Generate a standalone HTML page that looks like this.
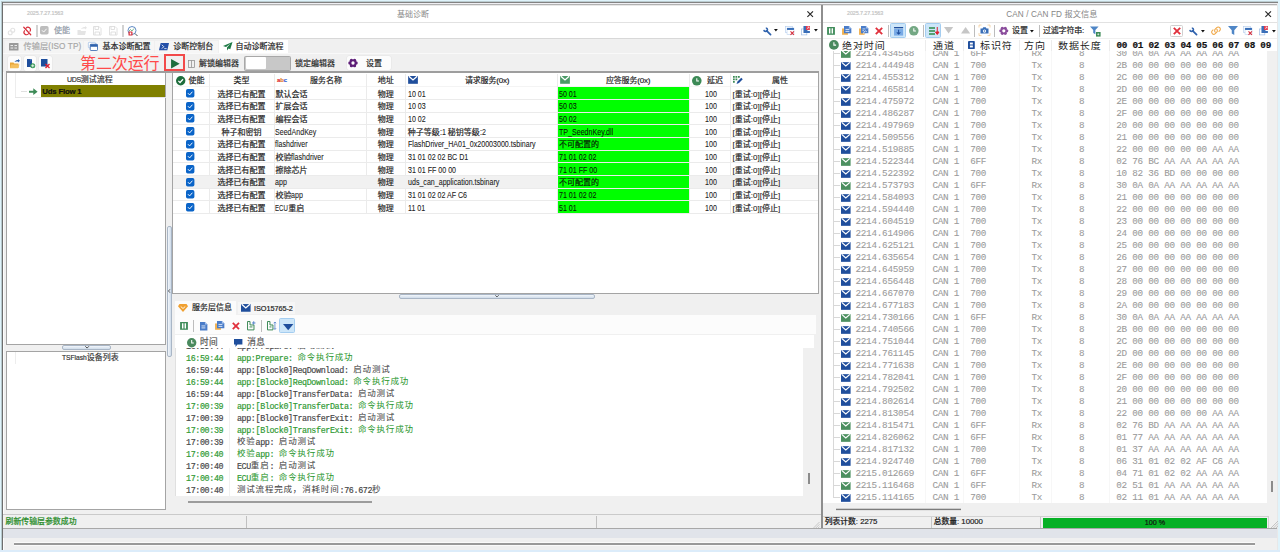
<!DOCTYPE html>
<html lang="zh"><head><meta charset="utf-8"><title>UI</title><style>
*{box-sizing:border-box;margin:0;padding:0}
html,body{width:1280px;height:552px;overflow:hidden;background:#f0f0f0}
body{position:relative;font-family:"Liberation Sans","Noto Sans CJK SC",sans-serif;font-size:8px;color:#222;line-height:1}
.a{position:absolute}
.t{position:absolute;white-space:nowrap;-webkit-text-stroke:0.18px currentColor}
.m{font-family:"Liberation Mono","Noto Sans CJK SC",monospace}
.u{-webkit-text-stroke:0.08px currentColor}
svg{position:absolute;overflow:visible}
.lc{font-size:8.5px;letter-spacing:0.83px;font-family:"Liberation Mono","Noto Sans CJK SC",monospace;position:relative;top:-1px;-webkit-text-stroke:0.05px currentColor}

</style></head><body>
<div class="a" style="left:0px;top:0px;width:1280px;height:552px;background:#dff3fb;"></div>
<div class="a" style="left:0px;top:550px;width:1280px;height:2px;background:#dcecfa;"></div>
<div class="a" style="left:1px;top:1px;width:1277px;height:549px;background:#f0f0f0;"></div>
<div class="a" style="left:1277px;top:1px;width:1px;height:549px;background:#e8e8e8;"></div>
<div class="a" style="left:1px;top:1px;width:1277px;height:1px;background:#bccdd1;"></div>
<div class="a" style="left:2px;top:2px;width:1276px;height:1px;background:#828282;"></div>
<div class="a" style="left:3px;top:3px;width:1274px;height:1px;background:#efeff3;"></div>
<div class="a" style="left:3px;top:4px;width:1274px;height:1px;background:#b2b2b2;"></div>
<div class="a" style="left:3px;top:5px;width:1274px;height:1px;background:#e8e8e8;"></div>
<div class="a" style="left:1px;top:1px;width:1px;height:549px;background:#b8cace;"></div>
<div class="a" style="left:2px;top:2px;width:1px;height:548px;background:#6e6e6e;"></div>
<div class="a" style="left:3px;top:6px;width:1px;height:544px;background:#fdfdfd;"></div>
<div class="a" style="left:3.3px;top:528.7px;width:1274px;height:9.5px;background:#e1e4ea;"></div>
<div class="a" style="left:4px;top:538.2px;width:1273px;height:11.8px;background:#f0f0f0;"></div>
<div class="a" style="left:14px;top:542px;width:1241px;height:4px;background:#fbfbfb;"></div>
<div class="a" style="left:14px;top:543px;width:1241px;height:2px;background:#9a9a9a;"></div>
<div class="a" style="left:3.3px;top:6px;width:817.7px;height:16.2px;background:#fff;"></div>
<div class="a" style="left:3.3px;top:22.2px;width:817.7px;height:16px;background:#fff;"></div>
<div class="a" style="left:3.3px;top:22px;width:817.7px;height:0.7px;background:#e2e2e2;"></div>
<div class="a" style="left:3.3px;top:38.2px;width:817.7px;height:0.7px;background:#d8d8d8;"></div>
<div class="a" style="left:821px;top:5px;width:2px;height:524px;background:#8e8e8e;"></div>
<div class="a" style="left:822.8px;top:6px;width:454.5px;height:16.2px;background:#fff;"></div>
<div class="a" style="left:822.8px;top:22.2px;width:454.5px;height:16px;background:#fff;"></div>
<div class="a" style="left:822.8px;top:22px;width:454.5px;height:0.7px;background:#e2e2e2;"></div>
<div class="t" style="left:27px;top:11px;font-size:5.4px;color:#c4c4c4;letter-spacing:-0.1px">2025.7.27.1563</div>
<div class="t" style="left:397px;top:11.2px;font-size:8px;color:#8a8a8a;-webkit-text-stroke:0">基础诊断</div>
<svg style="left:806.8px;top:10.9px;" width="6.4" height="6.2" viewBox="0 0 10 10"><path d="M0.5 0.5L9.5 9.5M9.5 0.5L0.5 9.5" stroke="#2a2a2a" stroke-width="1.9" fill="none"/></svg>
<svg style="left:7px;top:26.5px;" width="9" height="9" viewBox="0 0 18 18"><g fill="none" stroke="#e3e3e3" stroke-width="2.2"><circle cx="6.5" cy="11.5" r="4"/><circle cx="11.5" cy="6.5" r="4"/></g></svg>
<svg style="left:22px;top:26px;" width="10.5" height="10" viewBox="0 0 21 20"><g fill="none" stroke="#d8303c" stroke-width="2.4" stroke-linecap="round"><path d="M8 4.5a5 5 0 0 1 8 6"/><path d="M13 15.5a5 5 0 0 1-8-6"/><path d="M3.5 2.5L17.5 17.5"/></g></svg>
<div class="a" style="left:36px;top:24.5px;width:1.5px;height:12.8px;background:#d2d2d2;"></div>
<svg style="left:40px;top:26px;" width="8.6" height="8.6" viewBox="0 0 17 17"><rect x="0" y="0" width="17" height="17" rx="3.5" fill="#bdbdbd"/><path d="M4 8.5L7.3 12L13 5.5" stroke="#fff" stroke-width="1.8" fill="none"/></svg>
<div class="t" style="left:54px;top:27px;font-size:8px;color:#8e98a6;">使能</div>
<svg style="left:76.5px;top:26px;" width="10" height="9" viewBox="0 0 20 18"><g fill="#e4e4e4"><path d="M1 8h6l1 2h10l-2 8H1z"/><path d="M8 6c2-3 5-4 8-4V0l4 3.5L16 7V5c-3 0-5 0-8 1z"/></g></svg>
<svg style="left:93px;top:26px;" width="8.5" height="9.5" viewBox="0 0 17 19"><g fill="none" stroke="#dcdcdc" stroke-width="1.8"><path d="M1 1h11l4 4v13H1z"/><path d="M4 1v6h7V1M4 18v-6h9v6"/></g></svg>
<svg style="left:109px;top:26px;" width="8.5" height="9.5" viewBox="0 0 17 19"><g fill="none" stroke="#dcdcdc" stroke-width="1.8"><path d="M1 1h11l4 4v13H1z"/><path d="M4 1v6h7V1M4 18v-6h9v6"/></g></svg>
<div class="a" style="left:122px;top:24.5px;width:1.5px;height:12.8px;background:#d2d2d2;"></div>
<svg style="left:127px;top:25.5px;" width="11" height="11" viewBox="0 0 22 22"><circle cx="10" cy="9" r="8" fill="#fff" stroke="#3a6fb8" stroke-width="1.6"/><path d="M4 10l3-3 3 3 4-5" stroke="#4a9a5c" stroke-width="1.4" fill="none"/><path d="M16 15l5 5" stroke="#555" stroke-width="2"/><rect x="3" y="11" width="8" height="8" rx="1" fill="#d8303c"/><rect x="5.5" y="13" width="3" height="4" fill="#fff"/></svg>
<svg style="left:762.6px;top:26.6px;" width="9.2" height="8.8" viewBox="0 0 17 16"><path d="M6.500 6.500L14 14" stroke="#2f62ad" stroke-width="3.200" stroke-linecap="round" fill="none"/><path d="M5.200 1.600A3.400 3.400 0 1 1 1.600 5.200" stroke="#2f62ad" stroke-width="2.800" fill="none"/></svg>
<svg style="left:774.4px;top:29px;" width="3.8" height="2.4" viewBox="0 0 8 5"><path d="M0 0h8L4 5z" fill="#111"/></svg>
<svg style="left:785px;top:26px;" width="10" height="9.4" viewBox="0 0 20 19"><rect x="0.8" y="0.8" width="14" height="12" fill="#fff" stroke="#b9d0ee" stroke-width="1.4"/><rect x="4" y="4" width="14" height="13" fill="#fff" stroke="#b9d0ee" stroke-width="1.2"/><rect x="4" y="4" width="14" height="4" fill="#3a6fb8"/><path d="M11 11l7 7M18 11l-7 7" stroke="#d8303c" stroke-width="2.2"/></svg>
<svg style="left:801.4px;top:26px;" width="9.4" height="9.4" viewBox="0 0 19 19"><rect x="0.8" y="6" width="11" height="12" fill="#fff" stroke="#9dbbe4" stroke-width="1.4"/><path d="M5 0h8v10h5v4H5z" fill="#3a6fb8"/><rect x="10" y="0" width="8" height="8" fill="#e2384a"/><path d="M12 6l4-4M13 2h3v3" stroke="#fff" stroke-width="1.2" fill="none"/></svg>
<svg style="left:813.7px;top:29px;" width="3.8" height="2.4" viewBox="0 0 8 5"><path d="M0 0h8L4 5z" fill="#111"/></svg>
<div class="a" style="left:3.3px;top:38.9px;width:817.7px;height:14.3px;background:#f0f0f0;"></div>
<div class="a" style="left:5px;top:40.5px;width:77.5px;height:12.7px;background:#f4f4f4;"></div>
<div class="a" style="left:84px;top:40.5px;width:69.5px;height:12.7px;background:#f6f6f6;"></div>
<div class="a" style="left:155px;top:40.5px;width:62.5px;height:12.7px;background:#f6f6f6;"></div>
<div class="a" style="left:219px;top:39.6px;width:69px;height:13.8px;background:#fff;"></div>
<svg style="left:9px;top:43px;" width="9.5" height="7.6" viewBox="0 0 19 15"><rect width="19" height="15" rx="1" fill="#9a9a9a"/><path d="M3 5h13M3 10h13" stroke="#f0f0f0" stroke-width="2"/><rect x="8" y="3.5" width="3" height="3" fill="#9a9a9a"/><rect x="8" y="8.5" width="3" height="3" fill="#9a9a9a"/></svg>
<div class="t" style="left:23.5px;top:42.5px;font-size:8.2px;color:#a8a8a8;letter-spacing:0.1px">传输层(ISO TP)</div>
<svg style="left:88px;top:42px;" width="10" height="9" viewBox="0 0 20 18"><rect x="0.7" y="0.7" width="14" height="11" rx="1.5" fill="#fff" stroke="#9dbbe4" stroke-width="1.4"/><rect x="4.5" y="4.5" width="14.5" height="12.5" rx="1.5" fill="#fff" stroke="#2f62ad" stroke-width="1.6"/><rect x="4.5" y="4.5" width="14.5" height="5" fill="#2f62ad"/></svg>
<div class="t" style="left:102.4px;top:42.7px;font-size:8px;color:#222;">基本诊断配置</div>
<svg style="left:158.8px;top:43px;" width="10" height="7.4" viewBox="0 0 21 15"><path d="M3.5 0H21l-3.5 15H0z" fill="#2450a8"/><path d="M6 3.5l4 4-4 4" stroke="#fff" stroke-width="1.8" fill="none"/><path d="M11 11.5h5" stroke="#fff" stroke-width="1.6"/></svg>
<div class="t" style="left:173.2px;top:42.7px;font-size:8px;color:#222;">诊断控制台</div>
<svg style="left:222.5px;top:41.5px;" width="9.5" height="8.5" viewBox="0 0 19 17"><path d="M19 0L0 8l6 2.2L15 3 8 11v6l3-4 3.5 1.6z" fill="#1e7a46"/></svg>
<div class="t" style="left:235.6px;top:43px;font-size:8px;color:#222;">自动诊断流程</div>
<div class="a" style="left:3.3px;top:53.2px;width:817.7px;height:18.8px;background:#f0f0f0;"></div>
<div class="a" style="left:7.5px;top:56px;width:13px;height:14.5px;background:#fcfcfc;border-radius:2px;box-shadow:0 0 0 0.5px #e4e4e4"></div>
<div class="a" style="left:23.5px;top:56px;width:12.5px;height:14.5px;background:#fcfcfc;border-radius:2px;box-shadow:0 0 0 0.5px #e4e4e4"></div>
<div class="a" style="left:38.5px;top:56px;width:13px;height:14.5px;background:#fcfcfc;border-radius:2px;box-shadow:0 0 0 0.5px #e4e4e4"></div>
<svg style="left:9.5px;top:58.5px;" width="10" height="9.5" viewBox="0 0 20 19"><path d="M0 7h7l1.5 2H17v9H0z" fill="#e9a73a"/><path d="M2 11h17l-3 7.500H0z" fill="#f4c060"/><path d="M9 6c2-3 4-4 7-4V0l4 3.5L16 7V5c-3 0-5 0-7 1z" fill="#2f62ad"/></svg>
<svg style="left:26.5px;top:58.5px;" width="8.5" height="9.5" viewBox="0 0 17 19"><path d="M0 0h10v16H0z" fill="#1f4e9c"/><path d="M7 0h3l-3 4z" fill="#7aa0d8"/><circle cx="11.500" cy="13.500" r="5" fill="#3c9a5a"/><path d="M11.500 10.500v6M8.500 13.500h6" stroke="#fff" stroke-width="1.6"/></svg>
<svg style="left:41px;top:58.5px;" width="9" height="9.5" viewBox="0 0 18 19"><path d="M0 0h13v15H0z" fill="#1f4e9c"/><path d="M9 10l8 8M17 10l-8 8" stroke="#e02030" stroke-width="2.6"/></svg>
<div class="t" style="left:80px;top:55.6px;font-size:16px;color:#ff4a4a;letter-spacing:-0.1px;-webkit-text-stroke:0">第二次运行</div>
<div class="a" style="left:163.8px;top:54px;width:21.4px;height:17.2px;background:transparent;border:2px solid #f24a4a"></div>
<svg style="left:171px;top:59.2px;" width="8.8" height="9.6" viewBox="0 0 9 10"><path d="M0 0L9 5L0 10z" fill="#1d6d3c"/></svg>
<svg style="left:187.5px;top:60px;" width="7" height="7.8" viewBox="0 0 14 16"><rect x="0.8" y="0.8" width="12.4" height="14.4" fill="none" stroke="#8c8c8c" stroke-width="1.5"/><path d="M7 1v14" stroke="#8c8c8c" stroke-width="1.5"/></svg>
<div class="t" style="left:199px;top:60.2px;font-size:8px;color:#222;">解锁编辑器</div>
<div class="a" style="left:244px;top:56px;width:46.5px;height:14.5px;background:#c8c8c8;border-radius:1.5px;border:0.7px solid #a8a8a8"></div>
<div class="a" style="left:245.6px;top:57.3px;width:20px;height:11.8px;background:#fff;border-radius:1px"></div>
<div class="t" style="left:295px;top:60.2px;font-size:8px;color:#222;">锁定编辑器</div>
<div class="a" style="left:346.6px;top:56.3px;width:44.4px;height:14px;background:#fcfcfc;border-radius:2px;box-shadow:0 0 0 0.5px #e4e4e4"></div>
<svg style="left:348px;top:58.2px;" width="10" height="10" viewBox="0 0 20 20"><g fill="#5e1f78"><circle cx="10" cy="10" r="6.500"/><circle cx="16.20" cy="10.00" r="3.300"/><circle cx="13.10" cy="15.37" r="3.300"/><circle cx="6.90" cy="15.37" r="3.300"/><circle cx="3.80" cy="10.00" r="3.300"/><circle cx="6.90" cy="4.63" r="3.300"/><circle cx="13.10" cy="4.63" r="3.300"/></g><circle cx="10" cy="10" r="3.300" fill="#fcfcfc"/></svg>
<div class="t" style="left:366px;top:60px;font-size:8px;color:#222;">设置</div>
<div class="a" style="left:6px;top:72px;width:160px;height:272.6px;background:#fff;border:0.8px solid #a4a4a4"></div>
<div class="t" style="left:67px;top:76px;font-size:7px;color:#333;line-height:8px"><span style="letter-spacing:-0.35px">UDS</span><span style="font-size:8px">测试流程</span></div>
<div class="a" style="left:14.5px;top:72.8px;width:0.6px;height:24.5px;background:#ededed;"></div>
<div class="a" style="left:14.5px;top:97.2px;width:151px;height:0.6px;background:#e6e6e6;"></div>
<div class="a" style="left:41px;top:85.2px;width:124.4px;height:12px;background:#808000;"></div>
<svg style="left:29px;top:87.8px;" width="8.6" height="7.4" viewBox="0 0 18 15"><path d="M0 5.500h9V0.500L18 7.500 9 14.500V9.500H0z" fill="#3c8a56"/></svg>
<div class="a" style="left:21px;top:91px;width:6px;height:0.6px;background:#e0e0e0;"></div>
<div class="t" style="left:42.3px;top:87.9px;font-size:7.8px;color:#111;font-weight:bold;letter-spacing:-0.2px">Uds Flow 1</div>
<div class="a" style="left:62px;top:344.6px;width:49px;height:5.2px;background:linear-gradient(#f2f6fb,#cfdcea);border:0.7px solid #a9b6c6;border-radius:2px"></div>
<svg style="left:84.6px;top:346px;" width="4.2" height="2.6" viewBox="0 0 8 5"><path d="M0.5 0.5L4 4l3.5-3.500" stroke="#111" stroke-width="1.4" fill="none"/></svg>
<div class="a" style="left:6px;top:350.6px;width:160px;height:159px;background:#fff;border:0.8px solid #a4a4a4"></div>
<div class="t" style="left:61.9px;top:353.8px;font-size:6.7px;color:#333;line-height:8px">TSFlash<span style="font-size:8px">设备列表</span></div>
<div class="a" style="left:14.5px;top:352px;width:0.6px;height:12px;background:#ededed;"></div>
<div class="a" style="left:167.3px;top:72px;width:4.6px;height:438px;background:#f0f0f0;"></div>
<div class="a" style="left:167.2px;top:226px;width:4.6px;height:131px;background:linear-gradient(90deg,#f2f6fb,#cfdcea);border:0.7px solid #a9b6c6;border-radius:2px"></div>
<svg style="left:168.3px;top:289.4px;" width="2.4" height="4" viewBox="0 0 5 8"><path d="M4 0.5L1 4l3 3.500" stroke="#111" stroke-width="1.4" fill="none"/></svg>
<div class="a" style="left:172.2px;top:72.4px;width:646.4px;height:221.4px;background:#fff;border:0.8px solid #a4a4a4"></div>
<div class="a" style="left:173px;top:86px;width:645px;height:1px;background:#f4f4f4;"></div>
<div class="a" style="left:209px;top:74px;width:0.7px;height:139.667px;background:#ebebeb;"></div>
<div class="a" style="left:273.6px;top:74px;width:0.7px;height:139.667px;background:#ebebeb;"></div>
<div class="a" style="left:365.5px;top:74px;width:0.7px;height:139.667px;background:#ebebeb;"></div>
<div class="a" style="left:405.2px;top:74px;width:0.7px;height:139.667px;background:#ebebeb;"></div>
<div class="a" style="left:557.2px;top:74px;width:0.7px;height:139.667px;background:#ebebeb;"></div>
<div class="a" style="left:689.1px;top:74px;width:0.7px;height:139.667px;background:#ebebeb;"></div>
<div class="a" style="left:730.3px;top:74px;width:0.7px;height:139.667px;background:#ebebeb;"></div>
<div class="a" style="left:173px;top:99px;width:645px;height:1px;background:#ebebeb;"></div>
<div class="a" style="left:557.9px;top:87px;width:131.3px;height:12px;background:#00ff00;"></div>
<svg style="left:186.3px;top:89px;" width="8.4" height="8.4" viewBox="0 0 17 17"><rect width="17" height="17" rx="3.500" fill="#0a64c8"/><path d="M4 8.500L7.300 12 13 5.500" stroke="#fff" stroke-width="1.900" fill="none"/></svg>
<div class="t" style="left:209.3px;top:90.5px;width:64.6px;text-align:center;font-size:8px;color:#222">选择已有配置</div>
<div class="t" style="left:275.4px;top:90.5px;font-size:8px;color:#222">默认会话</div>
<div class="t" style="left:365.8px;top:90.5px;width:39.7px;text-align:center;font-size:8px;color:#222">物理</div>
<div class="t u" style="left:407.8px;top:90.5px;font-size:8.2px;color:#222;transform:scaleX(0.865);transform-origin:0 0">10 01</div>
<div class="t u" style="left:559.1px;top:90.5px;font-size:8.2px;color:#062006;transform:scaleX(0.865);transform-origin:0 0">50 01</div>
<div class="t u" style="left:704.6px;top:90.5px;font-size:8.2px;color:#222;transform:scaleX(0.865);transform-origin:0 0">100</div>
<div class="t u" style="left:732.6px;top:90.5px;font-size:8px;color:#222;transform:scaleX(1);transform-origin:0 0">[</div>
<div class="t" style="left:734.82px;top:90.5px;font-size:8px;color:#222">重试</div>
<div class="t u" style="left:750.82px;top:90.5px;font-size:8px;color:#222;transform:scaleX(1);transform-origin:0 0">:0][</div>
<div class="t" style="left:761.94px;top:90.5px;font-size:8px;color:#222">停止</div>
<div class="t u" style="left:777.94px;top:90.5px;font-size:8px;color:#222;transform:scaleX(1);transform-origin:0 0">]</div>
<div class="a" style="left:173px;top:112px;width:645px;height:1px;background:#ebebeb;"></div>
<div class="a" style="left:557.9px;top:100px;width:131.3px;height:12px;background:#00ff00;"></div>
<svg style="left:186.3px;top:101.667px;" width="8.4" height="8.4" viewBox="0 0 17 17"><rect width="17" height="17" rx="3.500" fill="#0a64c8"/><path d="M4 8.500L7.300 12 13 5.500" stroke="#fff" stroke-width="1.900" fill="none"/></svg>
<div class="t" style="left:209.3px;top:103.167px;width:64.6px;text-align:center;font-size:8px;color:#222">选择已有配置</div>
<div class="t" style="left:275.4px;top:103.167px;font-size:8px;color:#222">扩展会话</div>
<div class="t" style="left:365.8px;top:103.167px;width:39.7px;text-align:center;font-size:8px;color:#222">物理</div>
<div class="t u" style="left:407.8px;top:103.167px;font-size:8.2px;color:#222;transform:scaleX(0.865);transform-origin:0 0">10 03</div>
<div class="t u" style="left:559.1px;top:103.167px;font-size:8.2px;color:#062006;transform:scaleX(0.865);transform-origin:0 0">50 03</div>
<div class="t u" style="left:704.6px;top:103.167px;font-size:8.2px;color:#222;transform:scaleX(0.865);transform-origin:0 0">100</div>
<div class="t u" style="left:732.6px;top:103.167px;font-size:8px;color:#222;transform:scaleX(1);transform-origin:0 0">[</div>
<div class="t" style="left:734.82px;top:103.167px;font-size:8px;color:#222">重试</div>
<div class="t u" style="left:750.82px;top:103.167px;font-size:8px;color:#222;transform:scaleX(1);transform-origin:0 0">:0][</div>
<div class="t" style="left:761.94px;top:103.167px;font-size:8px;color:#222">停止</div>
<div class="t u" style="left:777.94px;top:103.167px;font-size:8px;color:#222;transform:scaleX(1);transform-origin:0 0">]</div>
<div class="a" style="left:173px;top:124px;width:645px;height:1px;background:#ebebeb;"></div>
<div class="a" style="left:557.9px;top:113px;width:131.3px;height:11px;background:#00ff00;"></div>
<svg style="left:186.3px;top:114.333px;" width="8.4" height="8.4" viewBox="0 0 17 17"><rect width="17" height="17" rx="3.500" fill="#0a64c8"/><path d="M4 8.500L7.300 12 13 5.500" stroke="#fff" stroke-width="1.900" fill="none"/></svg>
<div class="t" style="left:209.3px;top:115.833px;width:64.6px;text-align:center;font-size:8px;color:#222">选择已有配置</div>
<div class="t" style="left:275.4px;top:115.833px;font-size:8px;color:#222">编程会话</div>
<div class="t" style="left:365.8px;top:115.833px;width:39.7px;text-align:center;font-size:8px;color:#222">物理</div>
<div class="t u" style="left:407.8px;top:115.833px;font-size:8.2px;color:#222;transform:scaleX(0.865);transform-origin:0 0">10 02</div>
<div class="t u" style="left:559.1px;top:115.833px;font-size:8.2px;color:#062006;transform:scaleX(0.865);transform-origin:0 0">50 02</div>
<div class="t u" style="left:704.6px;top:115.833px;font-size:8.2px;color:#222;transform:scaleX(0.865);transform-origin:0 0">100</div>
<div class="t u" style="left:732.6px;top:115.833px;font-size:8px;color:#222;transform:scaleX(1);transform-origin:0 0">[</div>
<div class="t" style="left:734.82px;top:115.833px;font-size:8px;color:#222">重试</div>
<div class="t u" style="left:750.82px;top:115.833px;font-size:8px;color:#222;transform:scaleX(1);transform-origin:0 0">:0][</div>
<div class="t" style="left:761.94px;top:115.833px;font-size:8px;color:#222">停止</div>
<div class="t u" style="left:777.94px;top:115.833px;font-size:8px;color:#222;transform:scaleX(1);transform-origin:0 0">]</div>
<div class="a" style="left:173px;top:137px;width:645px;height:1px;background:#ebebeb;"></div>
<div class="a" style="left:557.9px;top:125px;width:131.3px;height:12px;background:#00ff00;"></div>
<svg style="left:186.3px;top:127px;" width="8.4" height="8.4" viewBox="0 0 17 17"><rect width="17" height="17" rx="3.500" fill="#0a64c8"/><path d="M4 8.500L7.300 12 13 5.500" stroke="#fff" stroke-width="1.900" fill="none"/></svg>
<div class="t" style="left:209.3px;top:128.5px;width:64.6px;text-align:center;font-size:8px;color:#222">种子和密钥</div>
<div class="t u" style="left:275.4px;top:128.5px;font-size:8.2px;color:#222;transform:scaleX(0.865);transform-origin:0 0">SeedAndKey</div>
<div class="t" style="left:365.8px;top:128.5px;width:39.7px;text-align:center;font-size:8px;color:#222">物理</div>
<div class="t" style="left:407.8px;top:128.5px;font-size:8px;color:#222">种子等级</div>
<div class="t u" style="left:439.8px;top:128.5px;font-size:8.2px;color:#222;transform:scaleX(0.865);transform-origin:0 0">:1 </div>
<div class="t" style="left:447.69px;top:128.5px;font-size:8px;color:#222">秘钥等级</div>
<div class="t u" style="left:479.69px;top:128.5px;font-size:8.2px;color:#222;transform:scaleX(0.865);transform-origin:0 0">:2</div>
<div class="t u" style="left:559.1px;top:128.5px;font-size:8.2px;color:#062006;transform:scaleX(0.865);transform-origin:0 0">TP_SeednKey.dll</div>
<div class="t u" style="left:704.6px;top:128.5px;font-size:8.2px;color:#222;transform:scaleX(0.865);transform-origin:0 0">100</div>
<div class="t u" style="left:732.6px;top:128.5px;font-size:8px;color:#222;transform:scaleX(1);transform-origin:0 0">[</div>
<div class="t" style="left:734.82px;top:128.5px;font-size:8px;color:#222">重试</div>
<div class="t u" style="left:750.82px;top:128.5px;font-size:8px;color:#222;transform:scaleX(1);transform-origin:0 0">:0][</div>
<div class="t" style="left:761.94px;top:128.5px;font-size:8px;color:#222">停止</div>
<div class="t u" style="left:777.94px;top:128.5px;font-size:8px;color:#222;transform:scaleX(1);transform-origin:0 0">]</div>
<div class="a" style="left:173px;top:150px;width:645px;height:1px;background:#ebebeb;"></div>
<div class="a" style="left:557.9px;top:138px;width:131.3px;height:12px;background:#00ff00;"></div>
<svg style="left:186.3px;top:139.667px;" width="8.4" height="8.4" viewBox="0 0 17 17"><rect width="17" height="17" rx="3.500" fill="#0a64c8"/><path d="M4 8.500L7.300 12 13 5.500" stroke="#fff" stroke-width="1.900" fill="none"/></svg>
<div class="t" style="left:209.3px;top:141.167px;width:64.6px;text-align:center;font-size:8px;color:#222">选择已有配置</div>
<div class="t u" style="left:275.4px;top:141.167px;font-size:8.2px;color:#222;transform:scaleX(0.865);transform-origin:0 0">flashdriver</div>
<div class="t" style="left:365.8px;top:141.167px;width:39.7px;text-align:center;font-size:8px;color:#222">物理</div>
<div class="t u" style="left:407.8px;top:141.167px;font-size:8.2px;color:#222;transform:scaleX(0.865);transform-origin:0 0">FlashDriver_HA01_0x20003000.tsbinary</div>
<div class="t" style="left:559.1px;top:141.167px;font-size:8px;color:#062006">不可配置的</div>
<div class="t u" style="left:704.6px;top:141.167px;font-size:8.2px;color:#222;transform:scaleX(0.865);transform-origin:0 0">100</div>
<div class="t u" style="left:732.6px;top:141.167px;font-size:8px;color:#222;transform:scaleX(1);transform-origin:0 0">[</div>
<div class="t" style="left:734.82px;top:141.167px;font-size:8px;color:#222">重试</div>
<div class="t u" style="left:750.82px;top:141.167px;font-size:8px;color:#222;transform:scaleX(1);transform-origin:0 0">:0][</div>
<div class="t" style="left:761.94px;top:141.167px;font-size:8px;color:#222">停止</div>
<div class="t u" style="left:777.94px;top:141.167px;font-size:8px;color:#222;transform:scaleX(1);transform-origin:0 0">]</div>
<div class="a" style="left:173px;top:162px;width:645px;height:1px;background:#ebebeb;"></div>
<div class="a" style="left:557.9px;top:151px;width:131.3px;height:11px;background:#00ff00;"></div>
<svg style="left:186.3px;top:152.334px;" width="8.4" height="8.4" viewBox="0 0 17 17"><rect width="17" height="17" rx="3.500" fill="#0a64c8"/><path d="M4 8.500L7.300 12 13 5.500" stroke="#fff" stroke-width="1.900" fill="none"/></svg>
<div class="t" style="left:209.3px;top:153.834px;width:64.6px;text-align:center;font-size:8px;color:#222">选择已有配置</div>
<div class="t" style="left:275.4px;top:153.834px;font-size:8px;color:#222">校验</div>
<div class="t u" style="left:291.4px;top:153.834px;font-size:8.2px;color:#222;transform:scaleX(0.865);transform-origin:0 0">flashdriver</div>
<div class="t" style="left:365.8px;top:153.834px;width:39.7px;text-align:center;font-size:8px;color:#222">物理</div>
<div class="t u" style="left:407.8px;top:153.834px;font-size:8.2px;color:#222;transform:scaleX(0.865);transform-origin:0 0">31 01 02 02 BC D1</div>
<div class="t u" style="left:559.1px;top:153.834px;font-size:8.2px;color:#062006;transform:scaleX(0.865);transform-origin:0 0">71 01 02 02</div>
<div class="t u" style="left:704.6px;top:153.834px;font-size:8.2px;color:#222;transform:scaleX(0.865);transform-origin:0 0">100</div>
<div class="t u" style="left:732.6px;top:153.834px;font-size:8px;color:#222;transform:scaleX(1);transform-origin:0 0">[</div>
<div class="t" style="left:734.82px;top:153.834px;font-size:8px;color:#222">重试</div>
<div class="t u" style="left:750.82px;top:153.834px;font-size:8px;color:#222;transform:scaleX(1);transform-origin:0 0">:0][</div>
<div class="t" style="left:761.94px;top:153.834px;font-size:8px;color:#222">停止</div>
<div class="t u" style="left:777.94px;top:153.834px;font-size:8px;color:#222;transform:scaleX(1);transform-origin:0 0">]</div>
<div class="a" style="left:173px;top:175px;width:645px;height:1px;background:#ebebeb;"></div>
<div class="a" style="left:557.9px;top:163px;width:131.3px;height:12px;background:#00ff00;"></div>
<svg style="left:186.3px;top:165px;" width="8.4" height="8.4" viewBox="0 0 17 17"><rect width="17" height="17" rx="3.500" fill="#0a64c8"/><path d="M4 8.500L7.300 12 13 5.500" stroke="#fff" stroke-width="1.900" fill="none"/></svg>
<div class="t" style="left:209.3px;top:166.5px;width:64.6px;text-align:center;font-size:8px;color:#222">选择已有配置</div>
<div class="t" style="left:275.4px;top:166.5px;font-size:8px;color:#222">擦除芯片</div>
<div class="t" style="left:365.8px;top:166.5px;width:39.7px;text-align:center;font-size:8px;color:#222">物理</div>
<div class="t u" style="left:407.8px;top:166.5px;font-size:8.2px;color:#222;transform:scaleX(0.865);transform-origin:0 0">31 01 FF 00 00</div>
<div class="t u" style="left:559.1px;top:166.5px;font-size:8.2px;color:#062006;transform:scaleX(0.865);transform-origin:0 0">71 01 FF 00</div>
<div class="t u" style="left:704.6px;top:166.5px;font-size:8.2px;color:#222;transform:scaleX(0.865);transform-origin:0 0">100</div>
<div class="t u" style="left:732.6px;top:166.5px;font-size:8px;color:#222;transform:scaleX(1);transform-origin:0 0">[</div>
<div class="t" style="left:734.82px;top:166.5px;font-size:8px;color:#222">重试</div>
<div class="t u" style="left:750.82px;top:166.5px;font-size:8px;color:#222;transform:scaleX(1);transform-origin:0 0">:0][</div>
<div class="t" style="left:761.94px;top:166.5px;font-size:8px;color:#222">停止</div>
<div class="t u" style="left:777.94px;top:166.5px;font-size:8px;color:#222;transform:scaleX(1);transform-origin:0 0">]</div>
<div class="a" style="left:173px;top:176px;width:384.5px;height:12px;background:#f1f1f1;"></div>
<div class="a" style="left:689.4px;top:176px;width:128.4px;height:12px;background:#f1f1f1;"></div>
<div class="a" style="left:173px;top:188px;width:645px;height:1px;background:#ebebeb;"></div>
<div class="a" style="left:557.9px;top:176px;width:131.3px;height:12px;background:#00ff00;"></div>
<svg style="left:186.3px;top:177.667px;" width="8.4" height="8.4" viewBox="0 0 17 17"><rect width="17" height="17" rx="3.500" fill="#0a64c8"/><path d="M4 8.500L7.300 12 13 5.500" stroke="#fff" stroke-width="1.900" fill="none"/></svg>
<div class="t" style="left:209.3px;top:179.167px;width:64.6px;text-align:center;font-size:8px;color:#222">选择已有配置</div>
<div class="t u" style="left:275.4px;top:179.167px;font-size:8.2px;color:#222;transform:scaleX(0.865);transform-origin:0 0">app</div>
<div class="t" style="left:365.8px;top:179.167px;width:39.7px;text-align:center;font-size:8px;color:#222">物理</div>
<div class="t u" style="left:407.8px;top:179.167px;font-size:8.2px;color:#222;transform:scaleX(0.865);transform-origin:0 0">uds_can_application.tsbinary</div>
<div class="t" style="left:559.1px;top:179.167px;font-size:8px;color:#062006">不可配置的</div>
<div class="t u" style="left:704.6px;top:179.167px;font-size:8.2px;color:#222;transform:scaleX(0.865);transform-origin:0 0">100</div>
<div class="t u" style="left:732.6px;top:179.167px;font-size:8px;color:#222;transform:scaleX(1);transform-origin:0 0">[</div>
<div class="t" style="left:734.82px;top:179.167px;font-size:8px;color:#222">重试</div>
<div class="t u" style="left:750.82px;top:179.167px;font-size:8px;color:#222;transform:scaleX(1);transform-origin:0 0">:0][</div>
<div class="t" style="left:761.94px;top:179.167px;font-size:8px;color:#222">停止</div>
<div class="t u" style="left:777.94px;top:179.167px;font-size:8px;color:#222;transform:scaleX(1);transform-origin:0 0">]</div>
<div class="a" style="left:173px;top:200px;width:645px;height:1px;background:#ebebeb;"></div>
<div class="a" style="left:557.9px;top:189px;width:131.3px;height:11px;background:#00ff00;"></div>
<svg style="left:186.3px;top:190.334px;" width="8.4" height="8.4" viewBox="0 0 17 17"><rect width="17" height="17" rx="3.500" fill="#0a64c8"/><path d="M4 8.500L7.300 12 13 5.500" stroke="#fff" stroke-width="1.900" fill="none"/></svg>
<div class="t" style="left:209.3px;top:191.834px;width:64.6px;text-align:center;font-size:8px;color:#222">选择已有配置</div>
<div class="t" style="left:275.4px;top:191.834px;font-size:8px;color:#222">校验</div>
<div class="t u" style="left:291.4px;top:191.834px;font-size:8.2px;color:#222;transform:scaleX(0.865);transform-origin:0 0">app</div>
<div class="t" style="left:365.8px;top:191.834px;width:39.7px;text-align:center;font-size:8px;color:#222">物理</div>
<div class="t u" style="left:407.8px;top:191.834px;font-size:8.2px;color:#222;transform:scaleX(0.865);transform-origin:0 0">31 01 02 02 AF C6</div>
<div class="t u" style="left:559.1px;top:191.834px;font-size:8.2px;color:#062006;transform:scaleX(0.865);transform-origin:0 0">71 01 02 02</div>
<div class="t u" style="left:704.6px;top:191.834px;font-size:8.2px;color:#222;transform:scaleX(0.865);transform-origin:0 0">100</div>
<div class="t u" style="left:732.6px;top:191.834px;font-size:8px;color:#222;transform:scaleX(1);transform-origin:0 0">[</div>
<div class="t" style="left:734.82px;top:191.834px;font-size:8px;color:#222">重试</div>
<div class="t u" style="left:750.82px;top:191.834px;font-size:8px;color:#222;transform:scaleX(1);transform-origin:0 0">:0][</div>
<div class="t" style="left:761.94px;top:191.834px;font-size:8px;color:#222">停止</div>
<div class="t u" style="left:777.94px;top:191.834px;font-size:8px;color:#222;transform:scaleX(1);transform-origin:0 0">]</div>
<div class="a" style="left:173px;top:213px;width:645px;height:1px;background:#ebebeb;"></div>
<div class="a" style="left:557.9px;top:201px;width:131.3px;height:12px;background:#00ff00;"></div>
<svg style="left:186.3px;top:203px;" width="8.4" height="8.4" viewBox="0 0 17 17"><rect width="17" height="17" rx="3.500" fill="#0a64c8"/><path d="M4 8.500L7.300 12 13 5.500" stroke="#fff" stroke-width="1.900" fill="none"/></svg>
<div class="t" style="left:209.3px;top:204.5px;width:64.6px;text-align:center;font-size:8px;color:#222">选择已有配置</div>
<div class="t u" style="left:275.4px;top:204.5px;font-size:8.2px;color:#222;transform:scaleX(0.7439);transform-origin:0 0">ECU</div>
<div class="t" style="left:288.28px;top:204.5px;font-size:8px;color:#222">重启</div>
<div class="t" style="left:365.8px;top:204.5px;width:39.7px;text-align:center;font-size:8px;color:#222">物理</div>
<div class="t u" style="left:407.8px;top:204.5px;font-size:8.2px;color:#222;transform:scaleX(0.865);transform-origin:0 0">11 01</div>
<div class="t u" style="left:559.1px;top:204.5px;font-size:8.2px;color:#062006;transform:scaleX(0.865);transform-origin:0 0">51 01</div>
<div class="t u" style="left:704.6px;top:204.5px;font-size:8.2px;color:#222;transform:scaleX(0.865);transform-origin:0 0">100</div>
<div class="t u" style="left:732.6px;top:204.5px;font-size:8px;color:#222;transform:scaleX(1);transform-origin:0 0">[</div>
<div class="t" style="left:734.82px;top:204.5px;font-size:8px;color:#222">重试</div>
<div class="t u" style="left:750.82px;top:204.5px;font-size:8px;color:#222;transform:scaleX(1);transform-origin:0 0">:0][</div>
<div class="t" style="left:761.94px;top:204.5px;font-size:8px;color:#222">停止</div>
<div class="t u" style="left:777.94px;top:204.5px;font-size:8px;color:#222;transform:scaleX(1);transform-origin:0 0">]</div>
<svg style="left:175.6px;top:75.5px;" width="9.4" height="9.4" viewBox="0 0 20 20"><circle cx="10" cy="10" r="10" fill="#1d6d3c"/><path d="M5 10.300l3.600 3.600L15 7" stroke="#fff" stroke-width="2.600" fill="none"/></svg>
<div class="t" style="left:188.6px;top:76.6px;font-size:8px;color:#222;">使能</div>
<div class="t" style="left:209.3px;top:76.6px;width:64.6px;text-align:center;font-size:8px;color:#222">类型</div>
<div class="t" style="left:277px;top:77.400px;font-size:6px;letter-spacing:-0.1px;font-weight:bold"><span style="color:#e03030">a</span><span style="color:#e08030">b</span><span style="color:#3060d0">c</span></div>
<div class="t" style="left:310px;top:76.6px;font-size:8px;color:#222;">服务名称</div>
<div class="t" style="left:365.8px;top:76.6px;width:39.7px;text-align:center;font-size:8px;color:#222">地址</div>
<svg style="left:408px;top:76.3px;" width="10" height="7.8" viewBox="0 0 20 16"><rect width="20" height="16" fill="#1f4e9c"/><path d="M1.500 0.500L10 8l8.500-7.500" stroke="#fff" stroke-width="2.800" fill="none"/></svg>
<div class="t" style="left:465px;top:76.6px;font-size:8px;color:#222;letter-spacing:-0.2px">请求服务(0x)</div>
<svg style="left:560px;top:76.3px;" width="10" height="7.8" viewBox="0 0 20 16"><rect width="20" height="16" fill="#4a9a66"/><path d="M1.500 0.500L10 8l8.500-7.500" stroke="#fff" stroke-width="2.800" fill="none"/></svg>
<div class="t" style="left:606px;top:76.6px;font-size:8px;color:#222;letter-spacing:-0.2px">应答服务(0x)</div>
<svg style="left:691.5px;top:75.5px;" width="9.6" height="9.6" viewBox="0 0 20 20"><circle cx="10" cy="10" r="10" fill="#3c8a56"/><path d="M10 4.500V10.500H14.500" stroke="#fff" stroke-width="2.200" fill="none"/></svg>
<div class="t" style="left:707px;top:76.6px;font-size:8px;color:#222;">延迟</div>
<svg style="left:733.3px;top:76px;" width="10" height="8.5" viewBox="0 0 20 17"><g fill="#3c8a56"><rect x="0" y="0" width="3.500" height="3.500"/><rect x="5" y="0" width="3.500" height="3.500"/><rect x="10" y="0" width="3.500" height="3.500"/><rect x="0" y="5" width="3.500" height="3.500"/><rect x="5" y="5" width="3.500" height="3.500"/><rect x="0" y="10" width="3.500" height="3.500"/></g><path d="M7 16l2-5 7.500-7.500 3 3L12 14z" fill="#1f4e9c"/></svg>
<div class="t" style="left:772px;top:76.6px;font-size:8px;color:#222;">属性</div>
<div class="a" style="left:398.5px;top:294.3px;width:196px;height:4.6px;background:linear-gradient(#f2f6fb,#cfdcea);border:0.7px solid #a9b6c6;border-radius:2px"></div>
<svg style="left:494.5px;top:295.2px;" width="4" height="2.4" viewBox="0 0 8 5"><path d="M0.500 0.500L4 4l3.500-3.500" stroke="#111" stroke-width="1.400" fill="none"/></svg>
<div class="a" style="left:172.2px;top:299px;width:646.4px;height:211px;background:#f0f0f0;"></div>
<div class="a" style="left:174.7px;top:300.9px;width:61.6px;height:14.6px;background:#fbfbfb;"></div>
<div class="a" style="left:237.7px;top:301.6px;width:57.3px;height:12.6px;background:#f6f6f6;"></div>
<svg style="left:177.5px;top:303.5px;" width="10" height="8" viewBox="0 0 20 16"><path d="M3 0h14l3 4.500L10 16 0 4.500z" fill="#f0a030"/><path d="M5.500 5l4.500 4 4.500-4" stroke="#fff" stroke-width="1.800" fill="none"/></svg>
<div class="t" style="left:192px;top:304.1px;font-size:8px;color:#222;">服务层信息</div>
<svg style="left:240.6px;top:303.6px;" width="9.6" height="7.8" viewBox="0 0 20 16"><rect width="20" height="16" fill="#1f4e9c"/><path d="M1.500 0.500L10 8l8.500-7.500" stroke="#fff" stroke-width="2.800" fill="none"/></svg>
<div class="t" style="left:254px;top:305.3px;font-size:7.3px;color:#222;letter-spacing:-0.05px">ISO15765-2</div>
<div class="a" style="left:174.7px;top:314.8px;width:641.7px;height:19.4px;background:#fcfcfc;"></div>
<svg style="left:180px;top:322.2px;" width="8" height="7.8" viewBox="0 0 16 16"><rect width="16" height="16" fill="#3f8c5a"/><rect x="3.800" y="2.600" width="3" height="10.800" fill="#fff"/><rect x="9.200" y="2.600" width="3" height="10.800" fill="#fff"/></svg>
<div class="a" style="left:193.2px;top:319.5px;width:0.9px;height:12.5px;background:#bdbdbd;"></div>
<svg style="left:200px;top:321.6px;" width="7.4" height="8.4" viewBox="0 0 15 17"><path d="M0 0h10l5 5v12H0z" fill="#4a7cc8"/><path d="M10 0v5h5z" fill="#a8c4ee"/><path d="M3 8h8M3 12h8" stroke="#e8f0fc" stroke-width="1.800"/></svg>
<svg style="left:214.8px;top:321.2px;" width="9.4" height="8.8" viewBox="0 0 19 18"><path d="M0 5h12v13H0z" fill="#f0b050"/><path d="M4 0h10l5 5v10H4z" fill="#4a7cc8"/><path d="M14 0v5h5z" fill="#a8c4ee"/><path d="M7 7h8M7 11h8" stroke="#e8f0fc" stroke-width="1.800"/></svg>
<svg style="left:231.6px;top:322px;" width="7.8" height="7.8" viewBox="0 0 10 10"><path d="M1 1l8 8M9 1l-8 8" stroke="#e0303c" stroke-width="2.300" fill="none"/></svg>
<svg style="left:247px;top:321px;" width="9" height="9.4" viewBox="0 0 18 19"><path d="M1 1v17h13V8H6V1z" fill="none" stroke="#3c8a56" stroke-width="2"/><path d="M5 12h6" stroke="#3c8a56" stroke-width="2"/><path d="M10 4h7M13.500 0.500v7" stroke="#4a7cc8" stroke-width="1.800"/></svg>
<div class="a" style="left:260.8px;top:319.5px;width:0.9px;height:12.5px;background:#bdbdbd;"></div>
<svg style="left:266.5px;top:321px;" width="9.4" height="9.4" viewBox="0 0 19 19"><path d="M1 1v17h11V8H6V1z" fill="none" stroke="#3c8a56" stroke-width="2"/><path d="M5 12h4" stroke="#3c8a56" stroke-width="2"/><path d="M16 2v15M13.500 4.500L16 2l2.500 2.500M13.500 14.500L16 17l2.500-2.500" stroke="#4a7cc8" stroke-width="1.500" fill="none"/></svg>
<div class="a" style="left:279px;top:318.3px;width:15.7px;height:14.9px;background:#cde6f9;border:0.7px solid #a4cdf0;border-radius:1.5px"></div>
<svg style="left:282.8px;top:323.6px;" width="10.4" height="6.4" viewBox="0 0 10 6"><path d="M0 0h10L5 6z" fill="#1f4e9c"/></svg>
<div class="a" style="left:175.4px;top:335.2px;width:639.1px;height:174.8px;background:#f0f0f0;"></div>
<div class="a" style="left:175.4px;top:335.2px;width:627.6px;height:160.6px;background:#fff;"></div>
<div class="a" style="left:175.4px;top:335.2px;width:0.7px;height:160.6px;background:#e0e0e0;"></div>
<div class="a" style="left:175.4px;top:335.2px;width:639.1px;height:12.4px;background:#fff;"></div>
<div class="a" style="left:229.2px;top:348px;width:0.6px;height:148px;background:#f0f0f0;"></div>
<svg style="left:187.3px;top:337.6px;" width="9.4" height="9.4" viewBox="0 0 20 20"><circle cx="10" cy="10" r="10" fill="#4a8a5e"/><path d="M10 4.500V10.500H14.500" stroke="#fff" stroke-width="2.200" fill="none"/></svg>
<div class="t" style="left:200px;top:338px;font-size:8.6px;color:#555;letter-spacing:0.5px">时间</div>
<svg style="left:233.8px;top:338.5px;" width="8.4" height="8" viewBox="0 0 17 16"><path d="M0 0h17v11H7l-4 5v-5H0z" fill="#1f4e9c"/></svg>
<div class="t" style="left:247.2px;top:338px;font-size:8.6px;color:#555;letter-spacing:0.5px">消息</div>
<div class="a m" style="left:176.4px;top:347.6px;width:626.6px;height:148.2px;overflow:hidden">
<div class="t" style="left:9.6px;top:-6.9px;color:#484848;font-size:8.4px;letter-spacing:-0.373px;height:12px;line-height:12px">16:59:44</div>
<div class="t" style="left:60.5px;top:-6.9px;color:#484848;font-size:8.4px;letter-spacing:-0.373px;height:12px;line-height:12px">app:Prepare: <span class="lc">启动测试</span></div>
<div class="t" style="left:9.6px;top:5.1px;color:#2f9a33;font-size:8.4px;letter-spacing:-0.373px;height:12px;line-height:12px">16:59:44</div>
<div class="t" style="left:60.5px;top:5.1px;color:#2f9a33;font-size:8.4px;letter-spacing:-0.373px;height:12px;line-height:12px">app:Prepare: <span class="lc">命令执行成功</span></div>
<div class="t" style="left:9.6px;top:17.1px;color:#484848;font-size:8.4px;letter-spacing:-0.373px;height:12px;line-height:12px">16:59:44</div>
<div class="t" style="left:60.5px;top:17.1px;color:#484848;font-size:8.4px;letter-spacing:-0.373px;height:12px;line-height:12px">app:[Block0]ReqDownload: <span class="lc">启动测试</span></div>
<div class="t" style="left:9.6px;top:29.1px;color:#2f9a33;font-size:8.4px;letter-spacing:-0.373px;height:12px;line-height:12px">16:59:44</div>
<div class="t" style="left:60.5px;top:29.1px;color:#2f9a33;font-size:8.4px;letter-spacing:-0.373px;height:12px;line-height:12px">app:[Block0]ReqDownload: <span class="lc">命令执行成功</span></div>
<div class="t" style="left:9.6px;top:41.1px;color:#484848;font-size:8.4px;letter-spacing:-0.373px;height:12px;line-height:12px">16:59:44</div>
<div class="t" style="left:60.5px;top:41.1px;color:#484848;font-size:8.4px;letter-spacing:-0.373px;height:12px;line-height:12px">app:[Block0]TransferData: <span class="lc">启动测试</span></div>
<div class="t" style="left:9.6px;top:53.1px;color:#2f9a33;font-size:8.4px;letter-spacing:-0.373px;height:12px;line-height:12px">17:00:39</div>
<div class="t" style="left:60.5px;top:53.1px;color:#2f9a33;font-size:8.4px;letter-spacing:-0.373px;height:12px;line-height:12px">app:[Block0]TransferData: <span class="lc">命令执行成功</span></div>
<div class="t" style="left:9.6px;top:65.1px;color:#484848;font-size:8.4px;letter-spacing:-0.373px;height:12px;line-height:12px">17:00:39</div>
<div class="t" style="left:60.5px;top:65.1px;color:#484848;font-size:8.4px;letter-spacing:-0.373px;height:12px;line-height:12px">app:[Block0]TransferExit: <span class="lc">启动测试</span></div>
<div class="t" style="left:9.6px;top:77.1px;color:#2f9a33;font-size:8.4px;letter-spacing:-0.373px;height:12px;line-height:12px">17:00:39</div>
<div class="t" style="left:60.5px;top:77.1px;color:#2f9a33;font-size:8.4px;letter-spacing:-0.373px;height:12px;line-height:12px">app:[Block0]TransferExit: <span class="lc">命令执行成功</span></div>
<div class="t" style="left:9.6px;top:89.1px;color:#484848;font-size:8.4px;letter-spacing:-0.373px;height:12px;line-height:12px">17:00:39</div>
<div class="t" style="left:60.5px;top:89.1px;color:#484848;font-size:8.4px;letter-spacing:-0.373px;height:12px;line-height:12px"><span class="lc">校验</span>app: <span class="lc">启动测试</span></div>
<div class="t" style="left:9.6px;top:101.1px;color:#2f9a33;font-size:8.4px;letter-spacing:-0.373px;height:12px;line-height:12px">17:00:40</div>
<div class="t" style="left:60.5px;top:101.1px;color:#2f9a33;font-size:8.4px;letter-spacing:-0.373px;height:12px;line-height:12px"><span class="lc">校验</span>app: <span class="lc">命令执行成功</span></div>
<div class="t" style="left:9.6px;top:113.1px;color:#484848;font-size:8.4px;letter-spacing:-0.373px;height:12px;line-height:12px">17:00:40</div>
<div class="t" style="left:60.5px;top:113.1px;color:#484848;font-size:8.4px;letter-spacing:-0.373px;height:12px;line-height:12px">ECU<span class="lc">重启</span>: <span class="lc">启动测试</span></div>
<div class="t" style="left:9.6px;top:125.1px;color:#2f9a33;font-size:8.4px;letter-spacing:-0.373px;height:12px;line-height:12px">17:00:40</div>
<div class="t" style="left:60.5px;top:125.1px;color:#2f9a33;font-size:8.4px;letter-spacing:-0.373px;height:12px;line-height:12px">ECU<span class="lc">重启</span>: <span class="lc">命令执行成功</span></div>
<div class="t" style="left:9.6px;top:137.1px;color:#484848;font-size:8.4px;letter-spacing:-0.373px;height:12px;line-height:12px">17:00:40</div>
<div class="t" style="left:60.5px;top:137.1px;color:#484848;font-size:8.4px;letter-spacing:-0.373px;height:12px;line-height:12px"><span class="lc">测试流程完成，消耗时间</span>:76.672<span class="lc">秒</span></div>
</div>
<div class="a" style="left:808px;top:473.4px;width:1.6px;height:11px;background:#8c8c8c;"></div>
<div class="a" style="left:188px;top:501px;width:184px;height:2px;background:#9c9c9c;"></div>
<div class="a" style="left:3.3px;top:514px;width:817.7px;height:14.3px;background:#f0f0f0;"></div>
<div class="a" style="left:3.3px;top:514px;width:817.7px;height:1px;background:#cacaca;"></div>
<div class="a" style="left:3.3px;top:528.2px;width:1274px;height:0.7px;background:#a8a8a8;"></div>
<div class="t" style="left:5.5px;top:518.2px;font-size:7.9px;color:#2e8f2e;font-weight:500">刷新传输层参数成功</div>
<div class="a" style="left:245.6px;top:516px;width:0.7px;height:12px;background:#c0c0c0;"></div>
<div class="a" style="left:596px;top:516px;width:0.7px;height:12px;background:#c0c0c0;"></div>
<svg style="left:813px;top:521.5px;" width="6.5" height="6.5" viewBox="0 0 10 10"><path d="M10 0L0 10M10 3.500L3.500 10M10 7L7 10" stroke="#b0b0b0" stroke-width="1"/></svg>
<div class="t" style="left:847px;top:11px;font-size:5.4px;color:#c4c4c4;letter-spacing:-0.1px">2025.7.27.1563</div>
<div class="t" style="left:1006.3px;top:10.8px;font-size:8.2px;color:#858585;letter-spacing:0.1px;-webkit-text-stroke:0">CAN / CAN FD 报文信息</div>
<svg style="left:1264.7px;top:10.9px;" width="6.4" height="6.2" viewBox="0 0 10 10"><path d="M0.5 0.5L9.5 9.5M9.5 0.5L0.5 9.5" stroke="#2a2a2a" stroke-width="1.9" fill="none"/></svg>
<div class="a" style="left:822.8px;top:38.5px;width:454.5px;height:0.6px;background:#e6e6e6;"></div>
<svg style="left:826.7px;top:26.9px;" width="8" height="7.8" viewBox="0 0 16 16"><rect width="16" height="16" fill="#3f8c5a"/><rect x="3.800" y="2.600" width="3" height="10.800" fill="#fff"/><rect x="9.200" y="2.600" width="3" height="10.800" fill="#fff"/></svg>
<svg style="left:842.2px;top:26.2px;" width="9.4" height="8.8" viewBox="0 0 19 18"><path d="M0 5h12v13H0z" fill="#f0b050"/><path d="M4 0h10l5 5v10H4z" fill="#4a7cc8"/><path d="M14 0v5h5z" fill="#a8c4ee"/><path d="M7 7h8M7 11h8" stroke="#e8f0fc" stroke-width="1.800"/></svg>
<svg style="left:858.6px;top:26.2px;" width="9.4" height="8.8" viewBox="0 0 19 18"><path d="M0 5h12v13H0z" fill="#f0b050"/><path d="M4 0h10l5 5v10H4z" fill="#4a7cc8"/><path d="M14 0v5h5z" fill="#a8c4ee"/><path d="M7 6h6M7 9.500h3" stroke="#e8f0fc" stroke-width="1.600"/><path d="M16 12a3.500 3.500 0 1 0 0.500 3" stroke="#fff" stroke-width="1.500" fill="none"/></svg>
<svg style="left:874.6px;top:26.6px;" width="8" height="8" viewBox="0 0 10 10"><path d="M1 1l8 8M9 1l-8 8" stroke="#e0303c" stroke-width="2.300" fill="none"/></svg>
<div class="a" style="left:888px;top:24.5px;width:0.9px;height:12.5px;background:#bdbdbd;"></div>
<div class="a" style="left:890px;top:22.8px;width:15.8px;height:14.9px;background:#cde6f9;border:0.7px solid #a4cdf0;border-radius:1.5px"></div>
<svg style="left:893.8px;top:26.6px;" width="9.2" height="8.6" viewBox="0 0 18 17"><rect x="0" y="4" width="18" height="13" fill="#78aae6"/><rect x="0" y="0" width="18" height="2.600" fill="#1f4e9c"/><path d="M9 5.500v8M5.500 10.500L9 14l3.500-3.500" stroke="#1f4e9c" stroke-width="2" fill="none"/></svg>
<svg style="left:909px;top:26.2px;" width="9.6" height="9.6" viewBox="0 0 20 20"><circle cx="10" cy="10" r="10" fill="#74a884"/><path d="M10 4.500V10.500H14.500" stroke="#fff" stroke-width="2.200" fill="none"/></svg>
<div class="a" style="left:923.2px;top:24.5px;width:0.9px;height:12.5px;background:#bdbdbd;"></div>
<div class="a" style="left:925.4px;top:22.8px;width:15.8px;height:14.9px;background:#cde6f9;border:0.7px solid #a4cdf0;border-radius:1.5px"></div>
<svg style="left:929px;top:27px;" width="10.5" height="8" viewBox="0 0 21 16"><path d="M0 2h12M0 8h12M0 14h12" stroke="#2e8a4a" stroke-width="3"/><path d="M16.500 0v13M13 10l3.500 5 3.500-5z" stroke="#e02030" stroke-width="2" fill="#e02030"/></svg>
<svg style="left:944.4px;top:27.4px;" width="9.2" height="6.6" viewBox="0 0 10 7"><path d="M0 0h10L5 7z" fill="#c6c6c6"/></svg>
<svg style="left:960.7px;top:27.4px;" width="9.2" height="6.6" viewBox="0 0 10 7"><path d="M0 7h10L5 0z" fill="#c6c6c6"/></svg>
<div class="a" style="left:974.2px;top:24.5px;width:0.9px;height:12.5px;background:#bdbdbd;"></div>
<svg style="left:979px;top:25.4px;" width="11" height="10.6" viewBox="0 0 22 21"><path d="M0 5V0h5M17 0h5v5M22 16v5h-5M5 21H0v-5" stroke="#f0c080" stroke-width="1.300" fill="none"/><path d="M3 7h4l1.500-2.500h5L15 7h4v10H3z" fill="#3a6fb8"/><circle cx="11" cy="12" r="3.300" fill="#fff"/><circle cx="11" cy="12" r="1.500" fill="#3a6fb8"/></svg>
<div class="a" style="left:994.2px;top:24.5px;width:0.9px;height:12.5px;background:#bdbdbd;"></div>
<svg style="left:999.4px;top:26px;" width="9.6" height="9.6" viewBox="0 0 20 20"><g fill="#8a4c9c"><circle cx="10" cy="10" r="6.500"/><circle cx="16.20" cy="10.00" r="3.300"/><circle cx="13.10" cy="15.37" r="3.300"/><circle cx="6.90" cy="15.37" r="3.300"/><circle cx="3.80" cy="10.00" r="3.300"/><circle cx="6.90" cy="4.63" r="3.300"/><circle cx="13.10" cy="4.63" r="3.300"/></g><circle cx="10" cy="10" r="3.300" fill="#fff"/></svg>
<div class="t" style="left:1012px;top:27px;font-size:8px;color:#222;">设置</div>
<svg style="left:1030.4px;top:30px;" width="3.8" height="2.4" viewBox="0 0 8 5"><path d="M0 0h8L4 5z" fill="#111"/></svg>
<div class="a" style="left:1039.2px;top:24.5px;width:0.9px;height:12.5px;background:#bdbdbd;"></div>
<div class="t" style="left:1043px;top:27px;font-size:8px;color:#222;letter-spacing:-0.2px">过滤字符串:</div>
<svg style="left:1090px;top:26.4px;" width="8.6" height="8.6" viewBox="0 0 20 18"><path d="M0 0h20l-7.500 8.500V18l-5-3V8.500z" fill="#4f86c6"/></svg>
<svg style="left:1095.6px;top:31.6px;" width="4.6" height="4.6" viewBox="0 0 9 9"><rect width="9" height="9" fill="#3c8a56"/><path d="M2.500 4.500h4M4.500 2.500v4" stroke="#fff" stroke-width="1.200"/></svg>
<div class="a" style="left:1170.2px;top:24.8px;width:13.2px;height:12.2px;background:#fff;border:0.7px solid #d0d0d0;border-radius:1.5px"></div>
<svg style="left:1172.8px;top:26.9px;" width="8" height="8" viewBox="0 0 10 10"><path d="M1 1l8 8M9 1l-8 8" stroke="#e0303c" stroke-width="2.300" fill="none"/></svg>
<svg style="left:1188.8px;top:26.8px;" width="9.2" height="8.8" viewBox="0 0 17 16"><path d="M6.500 6.500L14 14" stroke="#2f62ad" stroke-width="3.200" stroke-linecap="round" fill="none"/><path d="M5.200 1.600A3.400 3.400 0 1 1 1.600 5.200" stroke="#2f62ad" stroke-width="2.800" fill="none"/></svg>
<svg style="left:1200.8px;top:29.6px;" width="3.8" height="2.4" viewBox="0 0 8 5"><path d="M0 0h8L4 5z" fill="#111"/></svg>
<svg style="left:1211px;top:26.4px;" width="10" height="9.4" viewBox="0 0 20 19"><g fill="none" stroke="#f0a848" stroke-width="2.200" stroke-linecap="round"><path d="M8.500 12.500a4.200 4.200 0 0 1 0-6l3-3a4.200 4.200 0 0 1 6 6l-1.500 1.500"/><path d="M11.500 6.500a4.200 4.200 0 0 1 0 6l-3 3a4.200 4.200 0 0 1-6-6l1.500-1.500"/></g></svg>
<svg style="left:1227.5px;top:26.4px;" width="10" height="9" viewBox="0 0 20 18"><path d="M0 0h20l-7.500 8.500V18l-5-3V8.500z" fill="#4f86c6"/></svg>
<svg style="left:1243px;top:26px;" width="10" height="9.4" viewBox="0 0 20 19"><rect x="0.8" y="0.8" width="14" height="12" fill="#fff" stroke="#b9d0ee" stroke-width="1.4"/><rect x="4" y="4" width="14" height="13" fill="#fff" stroke="#b9d0ee" stroke-width="1.2"/><rect x="4" y="4" width="14" height="4" fill="#3a6fb8"/><path d="M11 11l7 7M18 11l-7 7" stroke="#d8303c" stroke-width="2.2"/></svg>
<svg style="left:1259px;top:26px;" width="9.4" height="9.4" viewBox="0 0 19 19"><rect x="0.8" y="6" width="11" height="12" fill="#fff" stroke="#9dbbe4" stroke-width="1.4"/><path d="M5 0h8v10h5v4H5z" fill="#3a6fb8"/><rect x="10" y="0" width="8" height="8" fill="#e2384a"/><path d="M12 6l4-4M13 2h3v3" stroke="#fff" stroke-width="1.2" fill="none"/></svg>
<svg style="left:1272.4px;top:29.6px;" width="3.8" height="2.4" viewBox="0 0 8 5"><path d="M0 0h8L4 5z" fill="#111"/></svg>
<div class="a" style="left:822.8px;top:39px;width:454.5px;height:475px;background:#f0f0f0;"></div>
<div class="a" style="left:822.8px;top:39px;width:444.2px;height:464.2px;background:#fff;"></div>
<div class="a" style="left:822.8px;top:39px;width:454.5px;height:11.8px;background:#fff;"></div>
<div class="a m" style="left:822.8px;top:50.8px;width:444.2px;height:452.4px;overflow:hidden;color:#9b9b9b;font-size:9.3px;letter-spacing:-0.247px">
<div class="a" style="left:10.6px;top:0;width:0.7px;height:446.9px;background:#d8d8d8"></div>
<div class="a" style="left:102.5px;top:0;width:0.7px;height:452.4px;background:#f7f7f7"></div>
<div class="a" style="left:140.6px;top:0;width:0.7px;height:452.4px;background:#f7f7f7"></div>
<div class="a" style="left:196.4px;top:0;width:0.7px;height:452.4px;background:#f7f7f7"></div>
<div class="a" style="left:228.1px;top:0;width:0.7px;height:452.4px;background:#f7f7f7"></div>
<div class="a" style="left:286px;top:0;width:0.7px;height:452.4px;background:#f7f7f7"></div>
<div class="a" style="left:10.6px;top:2.7px;width:7px;height:0.7px;background:#d8d8d8"></div>
<svg style="left:18.4px;top:-1.1px" width="9.6" height="8" viewBox="0 0 20 16"><rect width="20" height="16" fill="#4c9060"/><path d="M1.500 0.500L10 8l8.500-7.500" stroke="#fff" stroke-width="2.600" fill="none"/></svg>
<div class="t u" style="left:32.6px;top:-2.6px;height:12px;line-height:12px">2214.434568</div>
<div class="t u" style="left:109.6px;top:-2.6px;height:12px;line-height:12px">CAN 1</div>
<div class="t u" style="left:147.4px;top:-2.6px;height:12px;line-height:12px">6FF</div>
<div class="t u" style="left:208.6px;top:-2.6px;height:12px;line-height:12px">Rx</div>
<div class="t u" style="left:256.1px;top:-2.6px;height:12px;line-height:12px">8</div>
<div class="t u" style="left:293.4px;top:-2.6px;height:12px;line-height:12px">30 0A 0A AA AA AA AA AA</div>
<div class="a" style="left:10.6px;top:14.7px;width:7px;height:0.7px;background:#d8d8d8"></div>
<svg style="left:18.4px;top:10.9px" width="9.6" height="8" viewBox="0 0 20 16"><rect width="20" height="16" fill="#1f4e9c"/><path d="M1.500 0.500L10 8l8.500-7.500" stroke="#fff" stroke-width="2.600" fill="none"/></svg>
<div class="t u" style="left:32.6px;top:9.4px;height:12px;line-height:12px">2214.444948</div>
<div class="t u" style="left:109.6px;top:9.4px;height:12px;line-height:12px">CAN 1</div>
<div class="t u" style="left:147.4px;top:9.4px;height:12px;line-height:12px">700</div>
<div class="t u" style="left:208.6px;top:9.4px;height:12px;line-height:12px">Tx</div>
<div class="t u" style="left:256.1px;top:9.4px;height:12px;line-height:12px">8</div>
<div class="t u" style="left:293.4px;top:9.4px;height:12px;line-height:12px">2B 00 00 00 00 00 00 00</div>
<div class="a" style="left:10.6px;top:26.7px;width:7px;height:0.7px;background:#d8d8d8"></div>
<svg style="left:18.4px;top:22.9px" width="9.6" height="8" viewBox="0 0 20 16"><rect width="20" height="16" fill="#1f4e9c"/><path d="M1.500 0.500L10 8l8.500-7.500" stroke="#fff" stroke-width="2.600" fill="none"/></svg>
<div class="t u" style="left:32.6px;top:21.4px;height:12px;line-height:12px">2214.455312</div>
<div class="t u" style="left:109.6px;top:21.4px;height:12px;line-height:12px">CAN 1</div>
<div class="t u" style="left:147.4px;top:21.4px;height:12px;line-height:12px">700</div>
<div class="t u" style="left:208.6px;top:21.4px;height:12px;line-height:12px">Tx</div>
<div class="t u" style="left:256.1px;top:21.4px;height:12px;line-height:12px">8</div>
<div class="t u" style="left:293.4px;top:21.4px;height:12px;line-height:12px">2C 00 00 00 00 00 00 00</div>
<div class="a" style="left:10.6px;top:38.7px;width:7px;height:0.7px;background:#d8d8d8"></div>
<svg style="left:18.4px;top:34.9px" width="9.6" height="8" viewBox="0 0 20 16"><rect width="20" height="16" fill="#1f4e9c"/><path d="M1.500 0.500L10 8l8.500-7.500" stroke="#fff" stroke-width="2.600" fill="none"/></svg>
<div class="t u" style="left:32.6px;top:33.4px;height:12px;line-height:12px">2214.465814</div>
<div class="t u" style="left:109.6px;top:33.4px;height:12px;line-height:12px">CAN 1</div>
<div class="t u" style="left:147.4px;top:33.4px;height:12px;line-height:12px">700</div>
<div class="t u" style="left:208.6px;top:33.4px;height:12px;line-height:12px">Tx</div>
<div class="t u" style="left:256.1px;top:33.4px;height:12px;line-height:12px">8</div>
<div class="t u" style="left:293.4px;top:33.4px;height:12px;line-height:12px">2D 00 00 00 00 00 00 00</div>
<div class="a" style="left:10.6px;top:50.7px;width:7px;height:0.7px;background:#d8d8d8"></div>
<svg style="left:18.4px;top:46.9px" width="9.6" height="8" viewBox="0 0 20 16"><rect width="20" height="16" fill="#1f4e9c"/><path d="M1.500 0.500L10 8l8.500-7.500" stroke="#fff" stroke-width="2.600" fill="none"/></svg>
<div class="t u" style="left:32.6px;top:45.4px;height:12px;line-height:12px">2214.475972</div>
<div class="t u" style="left:109.6px;top:45.4px;height:12px;line-height:12px">CAN 1</div>
<div class="t u" style="left:147.4px;top:45.4px;height:12px;line-height:12px">700</div>
<div class="t u" style="left:208.6px;top:45.4px;height:12px;line-height:12px">Tx</div>
<div class="t u" style="left:256.1px;top:45.4px;height:12px;line-height:12px">8</div>
<div class="t u" style="left:293.4px;top:45.4px;height:12px;line-height:12px">2E 00 00 00 00 00 00 00</div>
<div class="a" style="left:10.6px;top:62.7px;width:7px;height:0.7px;background:#d8d8d8"></div>
<svg style="left:18.4px;top:58.9px" width="9.6" height="8" viewBox="0 0 20 16"><rect width="20" height="16" fill="#1f4e9c"/><path d="M1.500 0.500L10 8l8.500-7.500" stroke="#fff" stroke-width="2.600" fill="none"/></svg>
<div class="t u" style="left:32.6px;top:57.4px;height:12px;line-height:12px">2214.486287</div>
<div class="t u" style="left:109.6px;top:57.4px;height:12px;line-height:12px">CAN 1</div>
<div class="t u" style="left:147.4px;top:57.4px;height:12px;line-height:12px">700</div>
<div class="t u" style="left:208.6px;top:57.4px;height:12px;line-height:12px">Tx</div>
<div class="t u" style="left:256.1px;top:57.4px;height:12px;line-height:12px">8</div>
<div class="t u" style="left:293.4px;top:57.4px;height:12px;line-height:12px">2F 00 00 00 00 00 00 00</div>
<div class="a" style="left:10.6px;top:74.7px;width:7px;height:0.7px;background:#d8d8d8"></div>
<svg style="left:18.4px;top:70.9px" width="9.6" height="8" viewBox="0 0 20 16"><rect width="20" height="16" fill="#1f4e9c"/><path d="M1.500 0.500L10 8l8.500-7.500" stroke="#fff" stroke-width="2.600" fill="none"/></svg>
<div class="t u" style="left:32.6px;top:69.4px;height:12px;line-height:12px">2214.497969</div>
<div class="t u" style="left:109.6px;top:69.4px;height:12px;line-height:12px">CAN 1</div>
<div class="t u" style="left:147.4px;top:69.4px;height:12px;line-height:12px">700</div>
<div class="t u" style="left:208.6px;top:69.4px;height:12px;line-height:12px">Tx</div>
<div class="t u" style="left:256.1px;top:69.4px;height:12px;line-height:12px">8</div>
<div class="t u" style="left:293.4px;top:69.4px;height:12px;line-height:12px">20 00 00 00 00 00 00 00</div>
<div class="a" style="left:10.6px;top:86.7px;width:7px;height:0.7px;background:#d8d8d8"></div>
<svg style="left:18.4px;top:82.9px" width="9.6" height="8" viewBox="0 0 20 16"><rect width="20" height="16" fill="#1f4e9c"/><path d="M1.500 0.500L10 8l8.500-7.500" stroke="#fff" stroke-width="2.600" fill="none"/></svg>
<div class="t u" style="left:32.6px;top:81.4px;height:12px;line-height:12px">2214.509556</div>
<div class="t u" style="left:109.6px;top:81.4px;height:12px;line-height:12px">CAN 1</div>
<div class="t u" style="left:147.4px;top:81.4px;height:12px;line-height:12px">700</div>
<div class="t u" style="left:208.6px;top:81.4px;height:12px;line-height:12px">Tx</div>
<div class="t u" style="left:256.1px;top:81.4px;height:12px;line-height:12px">8</div>
<div class="t u" style="left:293.4px;top:81.4px;height:12px;line-height:12px">21 00 00 00 00 00 00 00</div>
<div class="a" style="left:10.6px;top:98.7px;width:7px;height:0.7px;background:#d8d8d8"></div>
<svg style="left:18.4px;top:94.9px" width="9.6" height="8" viewBox="0 0 20 16"><rect width="20" height="16" fill="#1f4e9c"/><path d="M1.500 0.500L10 8l8.500-7.500" stroke="#fff" stroke-width="2.600" fill="none"/></svg>
<div class="t u" style="left:32.6px;top:93.4px;height:12px;line-height:12px">2214.519885</div>
<div class="t u" style="left:109.6px;top:93.4px;height:12px;line-height:12px">CAN 1</div>
<div class="t u" style="left:147.4px;top:93.4px;height:12px;line-height:12px">700</div>
<div class="t u" style="left:208.6px;top:93.4px;height:12px;line-height:12px">Tx</div>
<div class="t u" style="left:256.1px;top:93.4px;height:12px;line-height:12px">8</div>
<div class="t u" style="left:293.4px;top:93.4px;height:12px;line-height:12px">22 00 00 00 00 00 AA AA</div>
<div class="a" style="left:10.6px;top:110.7px;width:7px;height:0.7px;background:#d8d8d8"></div>
<svg style="left:18.4px;top:106.9px" width="9.6" height="8" viewBox="0 0 20 16"><rect width="20" height="16" fill="#4c9060"/><path d="M1.500 0.500L10 8l8.500-7.500" stroke="#fff" stroke-width="2.600" fill="none"/></svg>
<div class="t u" style="left:32.6px;top:105.4px;height:12px;line-height:12px">2214.522344</div>
<div class="t u" style="left:109.6px;top:105.4px;height:12px;line-height:12px">CAN 1</div>
<div class="t u" style="left:147.4px;top:105.4px;height:12px;line-height:12px">6FF</div>
<div class="t u" style="left:208.6px;top:105.4px;height:12px;line-height:12px">Rx</div>
<div class="t u" style="left:256.1px;top:105.4px;height:12px;line-height:12px">8</div>
<div class="t u" style="left:293.4px;top:105.4px;height:12px;line-height:12px">02 76 BC AA AA AA AA AA</div>
<div class="a" style="left:10.6px;top:122.7px;width:7px;height:0.7px;background:#d8d8d8"></div>
<svg style="left:18.4px;top:118.9px" width="9.6" height="8" viewBox="0 0 20 16"><rect width="20" height="16" fill="#1f4e9c"/><path d="M1.500 0.500L10 8l8.500-7.500" stroke="#fff" stroke-width="2.600" fill="none"/></svg>
<div class="t u" style="left:32.6px;top:117.4px;height:12px;line-height:12px">2214.522392</div>
<div class="t u" style="left:109.6px;top:117.4px;height:12px;line-height:12px">CAN 1</div>
<div class="t u" style="left:147.4px;top:117.4px;height:12px;line-height:12px">700</div>
<div class="t u" style="left:208.6px;top:117.4px;height:12px;line-height:12px">Tx</div>
<div class="t u" style="left:256.1px;top:117.4px;height:12px;line-height:12px">8</div>
<div class="t u" style="left:293.4px;top:117.4px;height:12px;line-height:12px">10 82 36 BD 00 00 00 00</div>
<div class="a" style="left:10.6px;top:134.7px;width:7px;height:0.7px;background:#d8d8d8"></div>
<svg style="left:18.4px;top:130.9px" width="9.6" height="8" viewBox="0 0 20 16"><rect width="20" height="16" fill="#4c9060"/><path d="M1.500 0.500L10 8l8.500-7.500" stroke="#fff" stroke-width="2.600" fill="none"/></svg>
<div class="t u" style="left:32.6px;top:129.4px;height:12px;line-height:12px">2214.573793</div>
<div class="t u" style="left:109.6px;top:129.4px;height:12px;line-height:12px">CAN 1</div>
<div class="t u" style="left:147.4px;top:129.4px;height:12px;line-height:12px">6FF</div>
<div class="t u" style="left:208.6px;top:129.4px;height:12px;line-height:12px">Rx</div>
<div class="t u" style="left:256.1px;top:129.4px;height:12px;line-height:12px">8</div>
<div class="t u" style="left:293.4px;top:129.4px;height:12px;line-height:12px">30 0A 0A AA AA AA AA AA</div>
<div class="a" style="left:10.6px;top:146.7px;width:7px;height:0.7px;background:#d8d8d8"></div>
<svg style="left:18.4px;top:142.9px" width="9.6" height="8" viewBox="0 0 20 16"><rect width="20" height="16" fill="#1f4e9c"/><path d="M1.500 0.500L10 8l8.500-7.500" stroke="#fff" stroke-width="2.600" fill="none"/></svg>
<div class="t u" style="left:32.6px;top:141.4px;height:12px;line-height:12px">2214.584093</div>
<div class="t u" style="left:109.6px;top:141.4px;height:12px;line-height:12px">CAN 1</div>
<div class="t u" style="left:147.4px;top:141.4px;height:12px;line-height:12px">700</div>
<div class="t u" style="left:208.6px;top:141.4px;height:12px;line-height:12px">Tx</div>
<div class="t u" style="left:256.1px;top:141.4px;height:12px;line-height:12px">8</div>
<div class="t u" style="left:293.4px;top:141.4px;height:12px;line-height:12px">21 00 00 00 00 00 00 00</div>
<div class="a" style="left:10.6px;top:158.7px;width:7px;height:0.7px;background:#d8d8d8"></div>
<svg style="left:18.4px;top:154.9px" width="9.6" height="8" viewBox="0 0 20 16"><rect width="20" height="16" fill="#1f4e9c"/><path d="M1.500 0.500L10 8l8.500-7.500" stroke="#fff" stroke-width="2.600" fill="none"/></svg>
<div class="t u" style="left:32.6px;top:153.4px;height:12px;line-height:12px">2214.594440</div>
<div class="t u" style="left:109.6px;top:153.4px;height:12px;line-height:12px">CAN 1</div>
<div class="t u" style="left:147.4px;top:153.4px;height:12px;line-height:12px">700</div>
<div class="t u" style="left:208.6px;top:153.4px;height:12px;line-height:12px">Tx</div>
<div class="t u" style="left:256.1px;top:153.4px;height:12px;line-height:12px">8</div>
<div class="t u" style="left:293.4px;top:153.4px;height:12px;line-height:12px">22 00 00 00 00 00 00 00</div>
<div class="a" style="left:10.6px;top:170.7px;width:7px;height:0.7px;background:#d8d8d8"></div>
<svg style="left:18.4px;top:166.9px" width="9.6" height="8" viewBox="0 0 20 16"><rect width="20" height="16" fill="#1f4e9c"/><path d="M1.500 0.500L10 8l8.500-7.500" stroke="#fff" stroke-width="2.600" fill="none"/></svg>
<div class="t u" style="left:32.6px;top:165.4px;height:12px;line-height:12px">2214.604519</div>
<div class="t u" style="left:109.6px;top:165.4px;height:12px;line-height:12px">CAN 1</div>
<div class="t u" style="left:147.4px;top:165.4px;height:12px;line-height:12px">700</div>
<div class="t u" style="left:208.6px;top:165.4px;height:12px;line-height:12px">Tx</div>
<div class="t u" style="left:256.1px;top:165.4px;height:12px;line-height:12px">8</div>
<div class="t u" style="left:293.4px;top:165.4px;height:12px;line-height:12px">23 00 00 00 00 00 00 00</div>
<div class="a" style="left:10.6px;top:182.7px;width:7px;height:0.7px;background:#d8d8d8"></div>
<svg style="left:18.4px;top:178.9px" width="9.6" height="8" viewBox="0 0 20 16"><rect width="20" height="16" fill="#1f4e9c"/><path d="M1.500 0.500L10 8l8.500-7.500" stroke="#fff" stroke-width="2.600" fill="none"/></svg>
<div class="t u" style="left:32.6px;top:177.4px;height:12px;line-height:12px">2214.614906</div>
<div class="t u" style="left:109.6px;top:177.4px;height:12px;line-height:12px">CAN 1</div>
<div class="t u" style="left:147.4px;top:177.4px;height:12px;line-height:12px">700</div>
<div class="t u" style="left:208.6px;top:177.4px;height:12px;line-height:12px">Tx</div>
<div class="t u" style="left:256.1px;top:177.4px;height:12px;line-height:12px">8</div>
<div class="t u" style="left:293.4px;top:177.4px;height:12px;line-height:12px">24 00 00 00 00 00 00 00</div>
<div class="a" style="left:10.6px;top:194.7px;width:7px;height:0.7px;background:#d8d8d8"></div>
<svg style="left:18.4px;top:190.9px" width="9.6" height="8" viewBox="0 0 20 16"><rect width="20" height="16" fill="#1f4e9c"/><path d="M1.500 0.500L10 8l8.500-7.500" stroke="#fff" stroke-width="2.600" fill="none"/></svg>
<div class="t u" style="left:32.6px;top:189.4px;height:12px;line-height:12px">2214.625121</div>
<div class="t u" style="left:109.6px;top:189.4px;height:12px;line-height:12px">CAN 1</div>
<div class="t u" style="left:147.4px;top:189.4px;height:12px;line-height:12px">700</div>
<div class="t u" style="left:208.6px;top:189.4px;height:12px;line-height:12px">Tx</div>
<div class="t u" style="left:256.1px;top:189.4px;height:12px;line-height:12px">8</div>
<div class="t u" style="left:293.4px;top:189.4px;height:12px;line-height:12px">25 00 00 00 00 00 00 00</div>
<div class="a" style="left:10.6px;top:206.7px;width:7px;height:0.7px;background:#d8d8d8"></div>
<svg style="left:18.4px;top:202.9px" width="9.6" height="8" viewBox="0 0 20 16"><rect width="20" height="16" fill="#1f4e9c"/><path d="M1.500 0.500L10 8l8.500-7.500" stroke="#fff" stroke-width="2.600" fill="none"/></svg>
<div class="t u" style="left:32.6px;top:201.4px;height:12px;line-height:12px">2214.635654</div>
<div class="t u" style="left:109.6px;top:201.4px;height:12px;line-height:12px">CAN 1</div>
<div class="t u" style="left:147.4px;top:201.4px;height:12px;line-height:12px">700</div>
<div class="t u" style="left:208.6px;top:201.4px;height:12px;line-height:12px">Tx</div>
<div class="t u" style="left:256.1px;top:201.4px;height:12px;line-height:12px">8</div>
<div class="t u" style="left:293.4px;top:201.4px;height:12px;line-height:12px">26 00 00 00 00 00 00 00</div>
<div class="a" style="left:10.6px;top:218.7px;width:7px;height:0.7px;background:#d8d8d8"></div>
<svg style="left:18.4px;top:214.9px" width="9.6" height="8" viewBox="0 0 20 16"><rect width="20" height="16" fill="#1f4e9c"/><path d="M1.500 0.500L10 8l8.500-7.500" stroke="#fff" stroke-width="2.600" fill="none"/></svg>
<div class="t u" style="left:32.6px;top:213.4px;height:12px;line-height:12px">2214.645959</div>
<div class="t u" style="left:109.6px;top:213.4px;height:12px;line-height:12px">CAN 1</div>
<div class="t u" style="left:147.4px;top:213.4px;height:12px;line-height:12px">700</div>
<div class="t u" style="left:208.6px;top:213.4px;height:12px;line-height:12px">Tx</div>
<div class="t u" style="left:256.1px;top:213.4px;height:12px;line-height:12px">8</div>
<div class="t u" style="left:293.4px;top:213.4px;height:12px;line-height:12px">27 00 00 00 00 00 00 00</div>
<div class="a" style="left:10.6px;top:230.7px;width:7px;height:0.7px;background:#d8d8d8"></div>
<svg style="left:18.4px;top:226.9px" width="9.6" height="8" viewBox="0 0 20 16"><rect width="20" height="16" fill="#1f4e9c"/><path d="M1.500 0.500L10 8l8.500-7.500" stroke="#fff" stroke-width="2.600" fill="none"/></svg>
<div class="t u" style="left:32.6px;top:225.4px;height:12px;line-height:12px">2214.656448</div>
<div class="t u" style="left:109.6px;top:225.4px;height:12px;line-height:12px">CAN 1</div>
<div class="t u" style="left:147.4px;top:225.4px;height:12px;line-height:12px">700</div>
<div class="t u" style="left:208.6px;top:225.4px;height:12px;line-height:12px">Tx</div>
<div class="t u" style="left:256.1px;top:225.4px;height:12px;line-height:12px">8</div>
<div class="t u" style="left:293.4px;top:225.4px;height:12px;line-height:12px">28 00 00 00 00 00 00 00</div>
<div class="a" style="left:10.6px;top:242.7px;width:7px;height:0.7px;background:#d8d8d8"></div>
<svg style="left:18.4px;top:238.9px" width="9.6" height="8" viewBox="0 0 20 16"><rect width="20" height="16" fill="#1f4e9c"/><path d="M1.500 0.500L10 8l8.500-7.500" stroke="#fff" stroke-width="2.600" fill="none"/></svg>
<div class="t u" style="left:32.6px;top:237.4px;height:12px;line-height:12px">2214.667070</div>
<div class="t u" style="left:109.6px;top:237.4px;height:12px;line-height:12px">CAN 1</div>
<div class="t u" style="left:147.4px;top:237.4px;height:12px;line-height:12px">700</div>
<div class="t u" style="left:208.6px;top:237.4px;height:12px;line-height:12px">Tx</div>
<div class="t u" style="left:256.1px;top:237.4px;height:12px;line-height:12px">8</div>
<div class="t u" style="left:293.4px;top:237.4px;height:12px;line-height:12px">29 00 00 00 00 00 00 00</div>
<div class="a" style="left:10.6px;top:254.7px;width:7px;height:0.7px;background:#d8d8d8"></div>
<svg style="left:18.4px;top:250.9px" width="9.6" height="8" viewBox="0 0 20 16"><rect width="20" height="16" fill="#1f4e9c"/><path d="M1.500 0.500L10 8l8.500-7.500" stroke="#fff" stroke-width="2.600" fill="none"/></svg>
<div class="t u" style="left:32.6px;top:249.4px;height:12px;line-height:12px">2214.677183</div>
<div class="t u" style="left:109.6px;top:249.4px;height:12px;line-height:12px">CAN 1</div>
<div class="t u" style="left:147.4px;top:249.4px;height:12px;line-height:12px">700</div>
<div class="t u" style="left:208.6px;top:249.4px;height:12px;line-height:12px">Tx</div>
<div class="t u" style="left:256.1px;top:249.4px;height:12px;line-height:12px">8</div>
<div class="t u" style="left:293.4px;top:249.4px;height:12px;line-height:12px">2A 00 00 00 00 00 00 00</div>
<div class="a" style="left:10.6px;top:266.7px;width:7px;height:0.7px;background:#d8d8d8"></div>
<svg style="left:18.4px;top:262.9px" width="9.6" height="8" viewBox="0 0 20 16"><rect width="20" height="16" fill="#4c9060"/><path d="M1.500 0.500L10 8l8.500-7.500" stroke="#fff" stroke-width="2.600" fill="none"/></svg>
<div class="t u" style="left:32.6px;top:261.4px;height:12px;line-height:12px">2214.730166</div>
<div class="t u" style="left:109.6px;top:261.4px;height:12px;line-height:12px">CAN 1</div>
<div class="t u" style="left:147.4px;top:261.4px;height:12px;line-height:12px">6FF</div>
<div class="t u" style="left:208.6px;top:261.4px;height:12px;line-height:12px">Rx</div>
<div class="t u" style="left:256.1px;top:261.4px;height:12px;line-height:12px">8</div>
<div class="t u" style="left:293.4px;top:261.4px;height:12px;line-height:12px">30 0A 0A AA AA AA AA AA</div>
<div class="a" style="left:10.6px;top:278.7px;width:7px;height:0.7px;background:#d8d8d8"></div>
<svg style="left:18.4px;top:274.9px" width="9.6" height="8" viewBox="0 0 20 16"><rect width="20" height="16" fill="#1f4e9c"/><path d="M1.500 0.500L10 8l8.500-7.500" stroke="#fff" stroke-width="2.600" fill="none"/></svg>
<div class="t u" style="left:32.6px;top:273.4px;height:12px;line-height:12px">2214.740566</div>
<div class="t u" style="left:109.6px;top:273.4px;height:12px;line-height:12px">CAN 1</div>
<div class="t u" style="left:147.4px;top:273.4px;height:12px;line-height:12px">700</div>
<div class="t u" style="left:208.6px;top:273.4px;height:12px;line-height:12px">Tx</div>
<div class="t u" style="left:256.1px;top:273.4px;height:12px;line-height:12px">8</div>
<div class="t u" style="left:293.4px;top:273.4px;height:12px;line-height:12px">2B 00 00 00 00 00 00 00</div>
<div class="a" style="left:10.6px;top:290.7px;width:7px;height:0.7px;background:#d8d8d8"></div>
<svg style="left:18.4px;top:286.9px" width="9.6" height="8" viewBox="0 0 20 16"><rect width="20" height="16" fill="#1f4e9c"/><path d="M1.500 0.500L10 8l8.500-7.500" stroke="#fff" stroke-width="2.600" fill="none"/></svg>
<div class="t u" style="left:32.6px;top:285.4px;height:12px;line-height:12px">2214.751044</div>
<div class="t u" style="left:109.6px;top:285.4px;height:12px;line-height:12px">CAN 1</div>
<div class="t u" style="left:147.4px;top:285.4px;height:12px;line-height:12px">700</div>
<div class="t u" style="left:208.6px;top:285.4px;height:12px;line-height:12px">Tx</div>
<div class="t u" style="left:256.1px;top:285.4px;height:12px;line-height:12px">8</div>
<div class="t u" style="left:293.4px;top:285.4px;height:12px;line-height:12px">2C 00 00 00 00 00 00 00</div>
<div class="a" style="left:10.6px;top:302.7px;width:7px;height:0.7px;background:#d8d8d8"></div>
<svg style="left:18.4px;top:298.9px" width="9.6" height="8" viewBox="0 0 20 16"><rect width="20" height="16" fill="#1f4e9c"/><path d="M1.500 0.500L10 8l8.500-7.500" stroke="#fff" stroke-width="2.600" fill="none"/></svg>
<div class="t u" style="left:32.6px;top:297.4px;height:12px;line-height:12px">2214.761145</div>
<div class="t u" style="left:109.6px;top:297.4px;height:12px;line-height:12px">CAN 1</div>
<div class="t u" style="left:147.4px;top:297.4px;height:12px;line-height:12px">700</div>
<div class="t u" style="left:208.6px;top:297.4px;height:12px;line-height:12px">Tx</div>
<div class="t u" style="left:256.1px;top:297.4px;height:12px;line-height:12px">8</div>
<div class="t u" style="left:293.4px;top:297.4px;height:12px;line-height:12px">2D 00 00 00 00 00 00 00</div>
<div class="a" style="left:10.6px;top:314.7px;width:7px;height:0.7px;background:#d8d8d8"></div>
<svg style="left:18.4px;top:310.9px" width="9.6" height="8" viewBox="0 0 20 16"><rect width="20" height="16" fill="#1f4e9c"/><path d="M1.500 0.500L10 8l8.500-7.500" stroke="#fff" stroke-width="2.600" fill="none"/></svg>
<div class="t u" style="left:32.6px;top:309.4px;height:12px;line-height:12px">2214.771638</div>
<div class="t u" style="left:109.6px;top:309.4px;height:12px;line-height:12px">CAN 1</div>
<div class="t u" style="left:147.4px;top:309.4px;height:12px;line-height:12px">700</div>
<div class="t u" style="left:208.6px;top:309.4px;height:12px;line-height:12px">Tx</div>
<div class="t u" style="left:256.1px;top:309.4px;height:12px;line-height:12px">8</div>
<div class="t u" style="left:293.4px;top:309.4px;height:12px;line-height:12px">2E 00 00 00 00 00 00 00</div>
<div class="a" style="left:10.6px;top:326.7px;width:7px;height:0.7px;background:#d8d8d8"></div>
<svg style="left:18.4px;top:322.9px" width="9.6" height="8" viewBox="0 0 20 16"><rect width="20" height="16" fill="#1f4e9c"/><path d="M1.500 0.500L10 8l8.500-7.500" stroke="#fff" stroke-width="2.600" fill="none"/></svg>
<div class="t u" style="left:32.6px;top:321.4px;height:12px;line-height:12px">2214.782041</div>
<div class="t u" style="left:109.6px;top:321.4px;height:12px;line-height:12px">CAN 1</div>
<div class="t u" style="left:147.4px;top:321.4px;height:12px;line-height:12px">700</div>
<div class="t u" style="left:208.6px;top:321.4px;height:12px;line-height:12px">Tx</div>
<div class="t u" style="left:256.1px;top:321.4px;height:12px;line-height:12px">8</div>
<div class="t u" style="left:293.4px;top:321.4px;height:12px;line-height:12px">2F 00 00 00 00 00 00 00</div>
<div class="a" style="left:10.6px;top:338.7px;width:7px;height:0.7px;background:#d8d8d8"></div>
<svg style="left:18.4px;top:334.9px" width="9.6" height="8" viewBox="0 0 20 16"><rect width="20" height="16" fill="#1f4e9c"/><path d="M1.500 0.500L10 8l8.500-7.500" stroke="#fff" stroke-width="2.600" fill="none"/></svg>
<div class="t u" style="left:32.6px;top:333.4px;height:12px;line-height:12px">2214.792502</div>
<div class="t u" style="left:109.6px;top:333.4px;height:12px;line-height:12px">CAN 1</div>
<div class="t u" style="left:147.4px;top:333.4px;height:12px;line-height:12px">700</div>
<div class="t u" style="left:208.6px;top:333.4px;height:12px;line-height:12px">Tx</div>
<div class="t u" style="left:256.1px;top:333.4px;height:12px;line-height:12px">8</div>
<div class="t u" style="left:293.4px;top:333.4px;height:12px;line-height:12px">20 00 00 00 00 00 00 00</div>
<div class="a" style="left:10.6px;top:350.7px;width:7px;height:0.7px;background:#d8d8d8"></div>
<svg style="left:18.4px;top:346.9px" width="9.6" height="8" viewBox="0 0 20 16"><rect width="20" height="16" fill="#1f4e9c"/><path d="M1.500 0.500L10 8l8.500-7.500" stroke="#fff" stroke-width="2.600" fill="none"/></svg>
<div class="t u" style="left:32.6px;top:345.4px;height:12px;line-height:12px">2214.802614</div>
<div class="t u" style="left:109.6px;top:345.4px;height:12px;line-height:12px">CAN 1</div>
<div class="t u" style="left:147.4px;top:345.4px;height:12px;line-height:12px">700</div>
<div class="t u" style="left:208.6px;top:345.4px;height:12px;line-height:12px">Tx</div>
<div class="t u" style="left:256.1px;top:345.4px;height:12px;line-height:12px">8</div>
<div class="t u" style="left:293.4px;top:345.4px;height:12px;line-height:12px">21 00 00 00 00 00 00 00</div>
<div class="a" style="left:10.6px;top:362.7px;width:7px;height:0.7px;background:#d8d8d8"></div>
<svg style="left:18.4px;top:358.9px" width="9.6" height="8" viewBox="0 0 20 16"><rect width="20" height="16" fill="#1f4e9c"/><path d="M1.500 0.500L10 8l8.500-7.500" stroke="#fff" stroke-width="2.600" fill="none"/></svg>
<div class="t u" style="left:32.6px;top:357.4px;height:12px;line-height:12px">2214.813054</div>
<div class="t u" style="left:109.6px;top:357.4px;height:12px;line-height:12px">CAN 1</div>
<div class="t u" style="left:147.4px;top:357.4px;height:12px;line-height:12px">700</div>
<div class="t u" style="left:208.6px;top:357.4px;height:12px;line-height:12px">Tx</div>
<div class="t u" style="left:256.1px;top:357.4px;height:12px;line-height:12px">8</div>
<div class="t u" style="left:293.4px;top:357.4px;height:12px;line-height:12px">22 00 00 00 00 00 AA AA</div>
<div class="a" style="left:10.6px;top:374.7px;width:7px;height:0.7px;background:#d8d8d8"></div>
<svg style="left:18.4px;top:370.9px" width="9.6" height="8" viewBox="0 0 20 16"><rect width="20" height="16" fill="#4c9060"/><path d="M1.500 0.500L10 8l8.500-7.500" stroke="#fff" stroke-width="2.600" fill="none"/></svg>
<div class="t u" style="left:32.6px;top:369.4px;height:12px;line-height:12px">2214.815471</div>
<div class="t u" style="left:109.6px;top:369.4px;height:12px;line-height:12px">CAN 1</div>
<div class="t u" style="left:147.4px;top:369.4px;height:12px;line-height:12px">6FF</div>
<div class="t u" style="left:208.6px;top:369.4px;height:12px;line-height:12px">Rx</div>
<div class="t u" style="left:256.1px;top:369.4px;height:12px;line-height:12px">8</div>
<div class="t u" style="left:293.4px;top:369.4px;height:12px;line-height:12px">02 76 BD AA AA AA AA AA</div>
<div class="a" style="left:10.6px;top:386.7px;width:7px;height:0.7px;background:#d8d8d8"></div>
<svg style="left:18.4px;top:382.9px" width="9.6" height="8" viewBox="0 0 20 16"><rect width="20" height="16" fill="#4c9060"/><path d="M1.500 0.500L10 8l8.500-7.500" stroke="#fff" stroke-width="2.600" fill="none"/></svg>
<div class="t u" style="left:32.6px;top:381.4px;height:12px;line-height:12px">2214.826062</div>
<div class="t u" style="left:109.6px;top:381.4px;height:12px;line-height:12px">CAN 1</div>
<div class="t u" style="left:147.4px;top:381.4px;height:12px;line-height:12px">6FF</div>
<div class="t u" style="left:208.6px;top:381.4px;height:12px;line-height:12px">Rx</div>
<div class="t u" style="left:256.1px;top:381.4px;height:12px;line-height:12px">8</div>
<div class="t u" style="left:293.4px;top:381.4px;height:12px;line-height:12px">01 77 AA AA AA AA AA AA</div>
<div class="a" style="left:10.6px;top:398.7px;width:7px;height:0.7px;background:#d8d8d8"></div>
<svg style="left:18.4px;top:394.9px" width="9.6" height="8" viewBox="0 0 20 16"><rect width="20" height="16" fill="#1f4e9c"/><path d="M1.500 0.500L10 8l8.500-7.500" stroke="#fff" stroke-width="2.600" fill="none"/></svg>
<div class="t u" style="left:32.6px;top:393.4px;height:12px;line-height:12px">2214.817132</div>
<div class="t u" style="left:109.6px;top:393.4px;height:12px;line-height:12px">CAN 1</div>
<div class="t u" style="left:147.4px;top:393.4px;height:12px;line-height:12px">700</div>
<div class="t u" style="left:208.6px;top:393.4px;height:12px;line-height:12px">Tx</div>
<div class="t u" style="left:256.1px;top:393.4px;height:12px;line-height:12px">8</div>
<div class="t u" style="left:293.4px;top:393.4px;height:12px;line-height:12px">01 37 AA AA AA AA AA AA</div>
<div class="a" style="left:10.6px;top:410.7px;width:7px;height:0.7px;background:#d8d8d8"></div>
<svg style="left:18.4px;top:406.9px" width="9.6" height="8" viewBox="0 0 20 16"><rect width="20" height="16" fill="#1f4e9c"/><path d="M1.500 0.500L10 8l8.500-7.500" stroke="#fff" stroke-width="2.600" fill="none"/></svg>
<div class="t u" style="left:32.6px;top:405.4px;height:12px;line-height:12px">2214.924740</div>
<div class="t u" style="left:109.6px;top:405.4px;height:12px;line-height:12px">CAN 1</div>
<div class="t u" style="left:147.4px;top:405.4px;height:12px;line-height:12px">700</div>
<div class="t u" style="left:208.6px;top:405.4px;height:12px;line-height:12px">Tx</div>
<div class="t u" style="left:256.1px;top:405.4px;height:12px;line-height:12px">8</div>
<div class="t u" style="left:293.4px;top:405.4px;height:12px;line-height:12px">06 31 01 02 02 AF C6 AA</div>
<div class="a" style="left:10.6px;top:422.7px;width:7px;height:0.7px;background:#d8d8d8"></div>
<svg style="left:18.4px;top:418.9px" width="9.6" height="8" viewBox="0 0 20 16"><rect width="20" height="16" fill="#4c9060"/><path d="M1.500 0.500L10 8l8.500-7.500" stroke="#fff" stroke-width="2.600" fill="none"/></svg>
<div class="t u" style="left:32.6px;top:417.4px;height:12px;line-height:12px">2215.012669</div>
<div class="t u" style="left:109.6px;top:417.4px;height:12px;line-height:12px">CAN 1</div>
<div class="t u" style="left:147.4px;top:417.4px;height:12px;line-height:12px">6FF</div>
<div class="t u" style="left:208.6px;top:417.4px;height:12px;line-height:12px">Rx</div>
<div class="t u" style="left:256.1px;top:417.4px;height:12px;line-height:12px">8</div>
<div class="t u" style="left:293.4px;top:417.4px;height:12px;line-height:12px">04 71 01 02 02 AA AA AA</div>
<div class="a" style="left:10.6px;top:434.7px;width:7px;height:0.7px;background:#d8d8d8"></div>
<svg style="left:18.4px;top:430.9px" width="9.6" height="8" viewBox="0 0 20 16"><rect width="20" height="16" fill="#4c9060"/><path d="M1.500 0.500L10 8l8.500-7.500" stroke="#fff" stroke-width="2.600" fill="none"/></svg>
<div class="t u" style="left:32.6px;top:429.4px;height:12px;line-height:12px">2215.116468</div>
<div class="t u" style="left:109.6px;top:429.4px;height:12px;line-height:12px">CAN 1</div>
<div class="t u" style="left:147.4px;top:429.4px;height:12px;line-height:12px">6FF</div>
<div class="t u" style="left:208.6px;top:429.4px;height:12px;line-height:12px">Rx</div>
<div class="t u" style="left:256.1px;top:429.4px;height:12px;line-height:12px">8</div>
<div class="t u" style="left:293.4px;top:429.4px;height:12px;line-height:12px">02 51 01 AA AA AA AA AA</div>
<div class="a" style="left:10.6px;top:446.7px;width:7px;height:0.7px;background:#d8d8d8"></div>
<svg style="left:18.4px;top:442.9px" width="9.6" height="8" viewBox="0 0 20 16"><rect width="20" height="16" fill="#1f4e9c"/><path d="M1.500 0.500L10 8l8.500-7.500" stroke="#fff" stroke-width="2.600" fill="none"/></svg>
<div class="t u" style="left:32.6px;top:441.4px;height:12px;line-height:12px">2215.114165</div>
<div class="t u" style="left:109.6px;top:441.4px;height:12px;line-height:12px">CAN 1</div>
<div class="t u" style="left:147.4px;top:441.4px;height:12px;line-height:12px">700</div>
<div class="t u" style="left:208.6px;top:441.4px;height:12px;line-height:12px">Tx</div>
<div class="t u" style="left:256.1px;top:441.4px;height:12px;line-height:12px">8</div>
<div class="t u" style="left:293.4px;top:441.4px;height:12px;line-height:12px">02 11 01 AA AA AA AA AA</div>
</div>
<svg style="left:829.2px;top:40.2px;" width="9.8" height="9.8" viewBox="0 0 20 20"><circle cx="10" cy="10" r="10" fill="#4a8a5e"/><path d="M10 4.500V10.500H14.500" stroke="#fff" stroke-width="2.200" fill="none"/></svg>
<div class="t" style="left:842px;top:40.6px;font-size:9.4px;color:#222;letter-spacing:0.8px;-webkit-text-stroke:0;transform:scaleX(1.07);transform-origin:0 0">绝对时间</div>
<div class="t" style="left:932.8px;top:40.6px;font-size:9.4px;color:#222;letter-spacing:0.8px;-webkit-text-stroke:0;transform:scaleX(1.07);transform-origin:0 0">通道</div>
<svg style="left:968px;top:41px;" width="6.8" height="8" viewBox="0 0 14 16"><rect width="14" height="16" rx="1" fill="#1f4e9c"/><rect x="4" y="3" width="6" height="4" fill="#fff"/><rect x="4" y="9" width="6" height="4" fill="#fff"/></svg>
<div class="t" style="left:979.9px;top:40.6px;font-size:9.4px;color:#222;letter-spacing:0.8px;-webkit-text-stroke:0;transform:scaleX(1.07);transform-origin:0 0">标识符</div>
<div class="t" style="left:1024px;top:40.6px;font-size:9.4px;color:#222;letter-spacing:0.8px;-webkit-text-stroke:0;transform:scaleX(1.07);transform-origin:0 0">方向</div>
<div class="t" style="left:1057.9px;top:40.6px;font-size:9.4px;color:#222;letter-spacing:0.8px;-webkit-text-stroke:0;transform:scaleX(1.07);transform-origin:0 0">数据长度</div>
<div class="t m" style="left:1116.4px;top:40px;height:11px;line-height:11px;font-size:9.300px;letter-spacing:-0.247px;color:#111;font-weight:bold">00 01 02 03 04 05 06 07 08 09</div>
<div class="a" style="left:925.3px;top:40px;width:0.7px;height:10.5px;background:#ececec;"></div>
<div class="a" style="left:963.4px;top:40px;width:0.7px;height:10.5px;background:#ececec;"></div>
<div class="a" style="left:1019.2px;top:40px;width:0.7px;height:10.5px;background:#ececec;"></div>
<div class="a" style="left:1050.9px;top:40px;width:0.7px;height:10.5px;background:#ececec;"></div>
<div class="a" style="left:1108.8px;top:40px;width:0.7px;height:10.5px;background:#ececec;"></div>
<div class="a" style="left:836px;top:508px;width:124.6px;height:1px;background:#cdcdcd;"></div>
<div class="a" style="left:836px;top:509px;width:124.6px;height:1px;background:#7c7c7c;"></div>
<div class="a" style="left:836px;top:510px;width:124.6px;height:1px;background:#e2e2e2;"></div>
<div class="a" style="left:1271px;top:480.6px;width:2.2px;height:11.4px;background:#8c8c8c;"></div>
<div class="t" style="left:824.8px;top:518.4px;font-size:7.8px;color:#222;font-weight:500;letter-spacing:-0.03px">列表计数: 2275</div>
<div class="a" style="left:823.2px;top:515.6px;width:107.6px;height:0.7px;background:#d4d4d4;"></div>
<div class="a" style="left:931.2px;top:515.6px;width:0.7px;height:12.6px;background:#c8c8c8;"></div>
<div class="a" style="left:931.2px;top:515.6px;width:108.6px;height:0.7px;background:#d4d4d4;"></div>
<div class="t" style="left:933.8px;top:518.4px;font-size:7.8px;color:#222;font-weight:500;letter-spacing:-0.03px">总数量: 10000</div>
<div class="a" style="left:1040.3px;top:515.6px;width:0.7px;height:12.6px;background:#c8c8c8;"></div>
<div class="a" style="left:1040.3px;top:516.4px;width:228.6px;height:0.7px;background:#d0d0d0;"></div>
<div class="a" style="left:1268.4px;top:516.4px;width:0.7px;height:11.8px;background:#d0d0d0;"></div>
<div class="a" style="left:1042.7px;top:518.2px;width:224px;height:10px;background:#06b025;"></div>
<div class="t" style="left:1042.700px;top:519.300px;width:224.600px;text-align:center;font-size:7.200px;color:#111">100 %</div>
<svg style="left:1271px;top:520.5px;" width="7" height="7" viewBox="0 0 10 10"><path d="M10 0L0 10M10 3.500L3.500 10M10 7L7 10" stroke="#b0b0b0" stroke-width="1"/></svg>
<div class="a" style="left:6px;top:71.2px;width:812.6px;height:1.7px;background:#9e9e9e;"></div>
<div class="a" style="left:3.3px;top:53.4px;width:817.7px;height:0.8px;background:#f9f9f9;"></div>
</body></html>
